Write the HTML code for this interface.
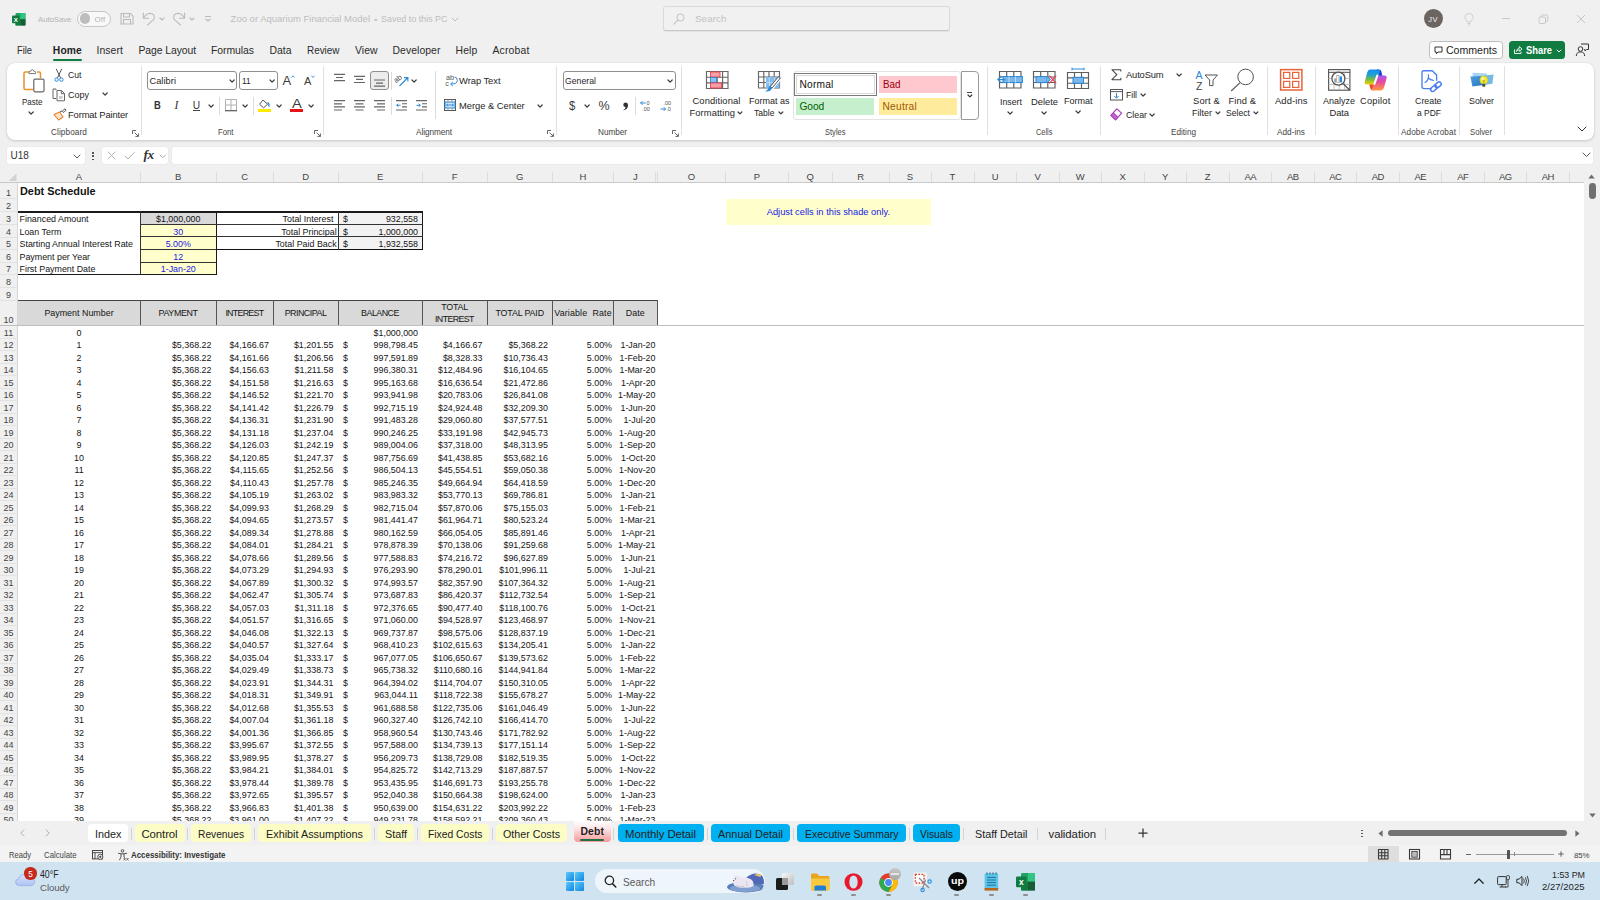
<!DOCTYPE html>
<html lang="en"><head><meta charset="utf-8"><title>Excel</title>
<style>
*{box-sizing:border-box;margin:0;padding:0}
html,body{width:1600px;height:900px;overflow:hidden}
body{background:#f0f0f0;font-family:"Liberation Sans",sans-serif;position:relative;color:#242424}
i{font-style:normal}
.abs{position:absolute}
/* GRID */
#grid{position:absolute;left:0;top:0;width:1600px;height:821px;overflow:hidden;pointer-events:none}
#sheet{position:absolute;left:17.5px;top:182.5px;width:1566.5px;height:638.5px;background:#fff}
.colhdr{position:absolute;left:0;top:170px;width:1584px;height:12.5px;background:#f0f0f0;border-bottom:1px solid #c9c9c9}
.ch{position:absolute;top:0;height:13px;line-height:14px;text-align:center;font-size:9.5px;color:#444}
.cs{position:absolute;top:172px;width:1px;height:10px;background:#dcdcdc}
.rowhdr{position:absolute;left:0;top:182.5px;width:17.5px;height:640px;background:#f0f0f0;border-right:1px solid #d6d6d6}
.rh{position:absolute;left:0;width:17px;text-align:center;font-size:9px;color:#444;overflow:hidden}
.rs{position:absolute;left:0;width:17px;height:1px;background:#e2e2e2}
.c{position:absolute;font-size:8.9px;white-space:nowrap;color:#141414;overflow:visible}
.c.l{text-align:left;padding-left:2px}
.c.r{text-align:right}
.c.ctr{text-align:center}
.c.p4{padding-right:4.6px}
.c.p2{padding-right:1.5px}
.c.acc{padding-right:4.5px}
.ds{position:absolute;left:5px;font-weight:normal}
.c.title{font-weight:bold;font-size:10.9px;padding-left:2.5px}
.c.gray{background:#d9d9d9}
.c.egray{background:#f2f2f2}
.c.yel{background:#ffffcc;color:#1a1ae6}
.yelbox{background:#ffffcc;color:#1a1ae6;font-size:9.3px!important}
.c.th{background:#d9d9d9;text-align:center;line-height:26px}
.ln{position:absolute}
.c.th.two{line-height:12px;padding-top:1px;white-space:normal}
</style>
<style>
.t{position:absolute;line-height:14px;white-space:nowrap;color:#242424}
svg{overflow:visible}
</style>
</head>
<body>
<svg class="abs" style="left:12.00px;top:12.50px" width="13.5" height="12.5" viewBox="0 0 13.5 12.5"><rect x="3.5" y="0" width="10" height="12.5" rx="1" fill="#21a366"/><rect x="8.5" y="0" width="5" height="6.2" fill="#33c481"/><rect x="3.5" y="6.2" width="5" height="6.3" fill="#107c41"/><rect x="8.5" y="6.2" width="5" height="6.3" fill="#185c37"/><rect x="0" y="2.6" width="7.6" height="7.6" rx="1" fill="#107c41"/><text x="3.8" y="8.7" font-size="6.2" font-weight="bold" fill="#fff" text-anchor="middle" font-family="Liberation Sans,sans-serif">X</text></svg>
<span class="t" style="left:38.10px;top:13.00px;font-size:7.9px;letter-spacing:-0.127px;color:#b4b4b4;">AutoSave</span>
<i class="abs" style="left:77.00px;top:10.50px;width:33.50px;height:16.00px;border:1px solid #c6c6c6;border-radius:8px;background:#f8f8f8"></i>
<i class="abs" style="left:79.70px;top:13.40px;width:10.60px;height:10.60px;border-radius:50%;background:#bdbdbd"></i>
<span class="t" style="left:94.50px;top:13.00px;font-size:7.9px;letter-spacing:0.203px;color:#b4b4b4;">Off</span>
<svg class="abs" style="left:120.00px;top:12.00px" width="14" height="13" viewBox="0 0 14 13"><path d="M1 1.5 H10.5 L13 4 V12 H1 Z M3.5 1.5 V5 H9.5 V1.5 M3.5 12 V7.5 H10.5 V12" fill="none" stroke="#bcbcbc" stroke-width="1.1"/></svg>
<svg class="abs" style="left:142.00px;top:11.50px" width="14" height="14" viewBox="0 0 14 14"><path d="M1.4 1 V6.2 H6.5 M1.6 6 C3.5 2.5 7 0.4 10 1.8 C13.2 3.4 12.8 6.4 11 8.2 L5.6 13" fill="none" stroke="#bcbcbc" stroke-width="1.1" stroke-linecap="round"/></svg>
<svg class="abs" style="left:159.00px;top:16.60px" width="6.0" height="4.0" viewBox="0 0 6.0 4.0"><path d="M1 1 L3.00 3.00 L5.00 1" fill="none" stroke="#bcbcbc" stroke-width="1.15" stroke-linecap="round" stroke-linejoin="round"/></svg>
<svg class="abs" style="left:172.00px;top:11.50px" width="14" height="14" viewBox="0 0 14 14"><path d="M12.6 1 V6.2 H7.5 M12.4 6 C10.5 2.5 7 0.4 4 1.8 C0.8 3.4 1.2 6.4 3 8.2 L8.4 13" fill="none" stroke="#bcbcbc" stroke-width="1.1" stroke-linecap="round"/></svg>
<svg class="abs" style="left:189.00px;top:16.60px" width="6.0" height="4.0" viewBox="0 0 6.0 4.0"><path d="M1 1 L3.00 3.00 L5.00 1" fill="none" stroke="#bcbcbc" stroke-width="1.15" stroke-linecap="round" stroke-linejoin="round"/></svg>
<i class="abs" style="left:205.00px;top:16.20px;width:6.00px;height:1.00px;background:#bcbcbc"></i>
<svg class="abs" style="left:205.00px;top:18.00px" width="6.0" height="4.0" viewBox="0 0 6.0 4.0"><path d="M1 1 L3.00 3.00 L5.00 1" fill="none" stroke="#bcbcbc" stroke-width="1.15" stroke-linecap="round" stroke-linejoin="round"/></svg>
<span class="t" style="left:230.60px;top:12.00px;font-size:9.5px;letter-spacing:-0.000px;color:#bdbdbd;">Zoo or Aquarium Financial Model</span>
<span class="t" style="left:373.50px;top:13.00px;font-size:8px;transform:scaleX(1.2444);transform-origin:0 50%;color:#bdbdbd;">•</span>
<span class="t" style="left:381.00px;top:12.00px;font-size:9.5px;transform:scaleX(0.9397);transform-origin:0 50%;color:#bdbdbd;">Saved to this PC</span>
<svg class="abs" style="left:451.00px;top:17.00px" width="8.0" height="5.0" viewBox="0 0 8.0 5.0"><path d="M1 1 L4.00 4.00 L7.00 1" fill="none" stroke="#bdbdbd" stroke-width="1" stroke-linecap="round" stroke-linejoin="round"/></svg>
<i class="abs" style="left:662.70px;top:6.40px;width:286.90px;height:25.00px;border:1px solid #dadada;border-bottom-color:#c8c8c8;border-radius:3px;background:#f1f1f1;box-shadow:0 1px 1px rgba(0,0,0,.06)"></i>
<svg class="abs" style="left:672.50px;top:12.50px" width="12" height="12" viewBox="0 0 12 12"><circle cx="7.5" cy="4.5" r="3.6" fill="none" stroke="#c2c2c2" stroke-width="1"/><path d="M5 7.2 L1 11.2" stroke="#c2c2c2" stroke-width="1.1" stroke-linecap="round"/></svg>
<span class="t" style="left:695.00px;top:12.00px;font-size:9.8px;letter-spacing:0.076px;color:#c2c2c2;">Search</span>
<i class="abs" style="left:1423.50px;top:9.30px;width:19.00px;height:19.00px;border-radius:50%;background:#6b6461"></i>
<span class="t" style="left:1428.30px;top:13.00px;font-size:7.6px;letter-spacing:0.363px;color:#f0f0f0;">JV</span>
<svg class="abs" style="left:1463.00px;top:11.50px" width="12" height="15" viewBox="0 0 12 15"><path d="M6 1.5 C3.2 1.5 2 3.6 2 5.3 C2 7.2 3.6 8 4 10 H8 C8.4 8 10 7.2 10 5.3 C10 3.6 8.8 1.5 6 1.5 Z M4.3 11.6 H7.7 M5 13.2 H7" fill="none" stroke="#cfcfcf" stroke-width="1"/></svg>
<i class="abs" style="left:1502.00px;top:18.00px;width:8.00px;height:1.00px;background:#c8c8c8"></i>
<svg class="abs" style="left:1538.00px;top:13.50px" width="11" height="11" viewBox="0 0 11 11"><rect x="1" y="3" width="6.5" height="6.5" rx="1.2" fill="none" stroke="#c8c8c8" stroke-width="1"/><path d="M3.2 3 V2.2 Q3.2 1 4.4 1 H8.6 Q9.8 1 9.8 2.2 V6.4 Q9.8 7.6 8.6 7.6 H7.6" fill="none" stroke="#c8c8c8" stroke-width="1"/></svg>
<svg class="abs" style="left:1576.00px;top:14.00px" width="10" height="10" viewBox="0 0 10 10"><path d="M1 1 L9 9 M9 1 L1 9" stroke="#c4c4c4" stroke-width="1"/></svg>
<span class="t" style="left:17.00px;top:44.00px;font-size:10.4px;transform:scaleX(0.8955);transform-origin:0 50%;color:#2b2b2b;">File</span>
<span class="t" style="left:96.50px;top:44.00px;font-size:10.4px;letter-spacing:0.083px;color:#2b2b2b;">Insert</span>
<span class="t" style="left:138.50px;top:44.00px;font-size:10.4px;letter-spacing:-0.078px;color:#2b2b2b;">Page Layout</span>
<span class="t" style="left:211.00px;top:44.00px;font-size:10.4px;letter-spacing:-0.039px;color:#2b2b2b;">Formulas</span>
<span class="t" style="left:269.50px;top:44.00px;font-size:10.4px;letter-spacing:0.012px;color:#2b2b2b;">Data</span>
<span class="t" style="left:307.00px;top:44.00px;font-size:10.4px;transform:scaleX(0.9537);transform-origin:0 50%;color:#2b2b2b;">Review</span>
<span class="t" style="left:355.00px;top:44.00px;font-size:10.4px;letter-spacing:0.039px;color:#2b2b2b;">View</span>
<span class="t" style="left:392.50px;top:44.00px;font-size:10.4px;letter-spacing:0.069px;color:#2b2b2b;">Developer</span>
<span class="t" style="left:455.50px;top:44.00px;font-size:10.4px;letter-spacing:0.156px;color:#2b2b2b;">Help</span>
<span class="t" style="left:492.50px;top:44.00px;font-size:10.4px;letter-spacing:0.170px;color:#2b2b2b;">Acrobat</span>
<span class="t" style="left:52.80px;top:44.00px;font-size:10.3px;letter-spacing:0.148px;font-weight:bold;color:#1f1f1f;">Home</span>
<i class="abs" style="left:53.00px;top:58.50px;width:29.00px;height:2.00px;background:#107c41;border-radius:1px"></i>
<i class="abs" style="left:1429.00px;top:41.30px;width:73.50px;height:18.00px;border:1px solid #bdbdbd;border-radius:3.5px;background:#fff"></i>
<svg class="abs" style="left:1433.50px;top:45.50px" width="9" height="9" viewBox="0 0 9 9"><path d="M1 1 H8 V6 H4 L2.3 7.8 V6 H1 Z" fill="none" stroke="#333" stroke-width="1" stroke-linejoin="round"/></svg>
<span class="t" style="left:1446.00px;top:43.00px;font-size:10.6px;letter-spacing:-0.027px;color:#242424;">Comments</span>
<i class="abs" style="left:1509.00px;top:41.00px;width:55.50px;height:18.30px;border-radius:3.5px;background:#107c41"></i>
<svg class="abs" style="left:1512.50px;top:45.00px" width="10" height="10" viewBox="0 0 10 10"><path d="M1.5 4.5 V8.5 H8 V6.5 M3.5 6.5 C3.8 4.2 5 3.3 6.3 3.3 V1.5 L9 4 L6.3 6.3 V4.7 C5.2 4.7 4.2 5.2 3.5 6.5 Z" fill="none" stroke="#fff" stroke-width="0.9" stroke-linejoin="round"/></svg>
<span class="t" style="left:1525.50px;top:43.00px;font-size:10.6px;transform:scaleX(0.8828);transform-origin:0 50%;font-weight:bold;color:#fff;">Share</span>
<svg class="abs" style="left:1556.00px;top:48.50px" width="6.0" height="4.0" viewBox="0 0 6.0 4.0"><path d="M1 1 L3.00 3.00 L5.00 1" fill="none" stroke="#fff" stroke-width="1" stroke-linecap="round" stroke-linejoin="round"/></svg>
<svg class="abs" style="left:1574.50px;top:43.00px" width="15" height="14" viewBox="0 0 15 14"><circle cx="5.5" cy="6" r="2.3" fill="none" stroke="#333" stroke-width="1"/><path d="M1.3 13 C1.6 9.6 3.5 9 5.5 9 C7.5 9 9.4 9.6 9.7 13" fill="none" stroke="#333" stroke-width="1"/><path d="M6 1 H13.5 V6.5 H11.5 L10 8 V6.5 H9.3" fill="none" stroke="#333" stroke-width="1" stroke-linejoin="round"/></svg>
<i class="abs" style="left:6.50px;top:62.50px;width:1587.50px;height:77.50px;background:#fff;border-radius:8px;box-shadow:0 1px 3px rgba(0,0,0,.16),0 0 1px rgba(0,0,0,.12)"></i>
<svg class="abs" style="left:23.00px;top:69.00px" width="22" height="24" viewBox="0 0 22 24"><path d="M7 3 H2.2 Q1 3 1 4.2 V19.3 Q1 20.5 2.2 20.5 H10" fill="none" stroke="#e8912d" stroke-width="1.5"/><path d="M14 3 H16.3 Q17.5 3 17.5 4.2 V9" fill="none" stroke="#e8912d" stroke-width="1.5"/><path d="M6 4.6 V3.2 Q6 2.4 6.8 2.4 H7.6 Q8 0.6 9.3 0.6 Q10.6 0.6 11 2.4 H11.8 Q12.6 2.4 12.6 3.2 V4.6 Z" fill="#fff" stroke="#777" stroke-width="1"/><rect x="10.8" y="10.2" width="10.2" height="12.6" rx="1.2" fill="#fff" stroke="#666" stroke-width="1.2"/></svg>
<span class="t" style="left:21.50px;top:95.00px;font-size:9.4px;transform:scaleX(0.8547);transform-origin:0 50%;color:#262626;">Paste</span>
<svg class="abs" style="left:28.10px;top:111.25px" width="6.2" height="4.1" viewBox="0 0 6.2 4.1"><path d="M1 1 L3.10 3.10 L5.20 1" fill="none" stroke="#3a3a3a" stroke-width="1.2" stroke-linecap="round" stroke-linejoin="round"/></svg>
<svg class="abs" style="left:54.00px;top:67.50px" width="10" height="14" viewBox="0 0 10 14"><path d="M2.2 0.8 L6.6 10 M7.8 0.8 L3.4 10" stroke="#555" stroke-width="1" fill="none"/><circle cx="2.6" cy="11.6" r="1.7" fill="none" stroke="#2b88d8" stroke-width="1"/><circle cx="7.4" cy="11.6" r="1.7" fill="none" stroke="#2b88d8" stroke-width="1"/></svg>
<span class="t" style="left:68.00px;top:68.00px;font-size:9.4px;transform:scaleX(0.9251);transform-origin:0 50%;color:#262626;">Cut</span>
<svg class="abs" style="left:52.00px;top:87.50px" width="14" height="14" viewBox="0 0 14 14"><path d="M4 2.2 V1 H1 V10.5 H4" fill="none" stroke="#666" stroke-width="1"/><path d="M5 2.5 H9.5 L12.5 5.5 V12.8 H5 Z M9.3 2.7 V5.7 H12.3" fill="#fff" stroke="#666" stroke-width="1" stroke-linejoin="round"/><rect x="7" y="8" width="3.5" height="3" fill="#ccc"/></svg>
<span class="t" style="left:68.00px;top:88.00px;font-size:9.4px;transform:scaleX(0.9593);transform-origin:0 50%;color:#262626;">Copy</span>
<svg class="abs" style="left:102.10px;top:92.45px" width="6.2" height="4.1" viewBox="0 0 6.2 4.1"><path d="M1 1 L3.10 3.10 L5.20 1" fill="none" stroke="#3a3a3a" stroke-width="1.2" stroke-linecap="round" stroke-linejoin="round"/></svg>
<svg class="abs" style="left:52.50px;top:107.50px" width="14" height="13" viewBox="0 0 14 13"><path d="M1 6.5 L6.5 4 L10 9 L5.5 12 Z" fill="#fbe3c8" stroke="#e8812d" stroke-width="1.1" stroke-linejoin="round"/><path d="M7 4 L9.2 2.8 L10.6 4.8 M9.8 2.6 L12 0.8 L13 2.2 L11 4.2" fill="none" stroke="#555" stroke-width="1"/></svg>
<span class="t" style="left:68.00px;top:108.00px;font-size:9.4px;letter-spacing:-0.143px;color:#262626;">Format Painter</span>
<span class="t" style="left:51.00px;top:126.00px;font-size:8.2px;letter-spacing:0.106px;color:#444;">Clipboard</span>
<svg class="abs" style="left:131.50px;top:130.00px" width="7" height="7" viewBox="0 0 7 7"><path d="M0.5 4 V0.5 H4 M2.6 2.6 L6.3 6.3 M6.4 3.4 V6.4 H3.4" fill="none" stroke="#555" stroke-width="0.9"/></svg>
<i class="abs" style="left:141.00px;top:66.00px;width:1.00px;height:69.00px;background:#e1e1e1"></i>
<i class="abs" style="left:147.30px;top:71.30px;width:90.00px;height:18.50px;border:1px solid #8f8f8f;border-radius:3px;background:#fff"></i>
<span class="t" style="left:149.50px;top:74.00px;font-size:9.2px;letter-spacing:0.065px;color:#262626;">Calibri</span>
<svg class="abs" style="left:229.40px;top:79.45px" width="6.2" height="4.1" viewBox="0 0 6.2 4.1"><path d="M1 1 L3.10 3.10 L5.20 1" fill="none" stroke="#3a3a3a" stroke-width="1.2" stroke-linecap="round" stroke-linejoin="round"/></svg>
<i class="abs" style="left:239.00px;top:71.30px;width:38.50px;height:18.50px;border:1px solid #8f8f8f;border-radius:3px;background:#fff"></i>
<span class="t" style="left:241.50px;top:74.00px;font-size:9.2px;transform:scaleX(0.8903);transform-origin:0 50%;color:#262626;">11</span>
<svg class="abs" style="left:269.20px;top:79.45px" width="6.2" height="4.1" viewBox="0 0 6.2 4.1"><path d="M1 1 L3.10 3.10 L5.20 1" fill="none" stroke="#3a3a3a" stroke-width="1.2" stroke-linecap="round" stroke-linejoin="round"/></svg>
<span class="t" style="left:282.50px;top:74.00px;font-size:13px;letter-spacing:-0.172px;color:#3b3b3b;">A</span>
<svg class="abs" style="left:290.50px;top:74.50px" width="4" height="3" viewBox="0 0 4 3"><path d="M0.5 2.5 L2 0.8 L3.5 2.5" fill="none" stroke="#2b88d8" stroke-width="0.9"/></svg>
<span class="t" style="left:304.00px;top:74.00px;font-size:11px;letter-spacing:0.156px;color:#3b3b3b;">A</span>
<svg class="abs" style="left:311.00px;top:74.50px" width="4" height="3" viewBox="0 0 4 3"><path d="M0.5 0.8 L2 2.5 L3.5 0.8" fill="none" stroke="#2b88d8" stroke-width="0.9"/></svg>
<span class="t" style="left:153.50px;top:98.00px;font-size:10.5px;transform:scaleX(0.8955);transform-origin:0 50%;font-weight:bold;color:#333;">B</span>
<span class="t" style="left:174.5px;top:98px;font-size:11.5px;font-style:italic;font-family:'Liberation Serif',serif;color:#333">I</span>
<span class="t" style="left:192.80px;top:99.00px;font-size:10.2px;letter-spacing:-0.159px;color:#333;">U</span>
<i class="abs" style="left:192.50px;top:110.20px;width:7.70px;height:0.90px;background:#444"></i>
<svg class="abs" style="left:208.20px;top:103.95px" width="6.2" height="4.1" viewBox="0 0 6.2 4.1"><path d="M1 1 L3.10 3.10 L5.20 1" fill="none" stroke="#3a3a3a" stroke-width="1.2" stroke-linecap="round" stroke-linejoin="round"/></svg>
<i class="abs" style="left:219.00px;top:97.00px;width:1.00px;height:17.50px;background:#dcdcdc"></i>
<svg class="abs" style="left:224.50px;top:99.00px" width="12" height="12.5" viewBox="0 0 12 12.5"><path d="M0.5 0.5 H11.5 V11.5 M0.5 0.5 V11.5 M6 0.5 V11.5 M0.5 6 H11.5" fill="none" stroke="#b0b0b0" stroke-width="1"/><path d="M0 11.7 H12" stroke="#555" stroke-width="1.2"/></svg>
<svg class="abs" style="left:242.10px;top:103.95px" width="6.2" height="4.1" viewBox="0 0 6.2 4.1"><path d="M1 1 L3.10 3.10 L5.20 1" fill="none" stroke="#3a3a3a" stroke-width="1.2" stroke-linecap="round" stroke-linejoin="round"/></svg>
<i class="abs" style="left:253.00px;top:97.00px;width:1.00px;height:17.50px;background:#dcdcdc"></i>
<svg class="abs" style="left:258.00px;top:98.50px" width="13" height="10" viewBox="0 0 13 10"><path d="M5 1 L9.6 5.2 L5.6 8.8 L1.6 5.2 Z" fill="#fff" stroke="#555" stroke-width="1" stroke-linejoin="round"/><path d="M9.5 3.5 Q11.5 4.5 10.8 7.5" fill="none" stroke="#2b88d8" stroke-width="1.3"/></svg>
<i class="abs" style="left:258.00px;top:109.30px;width:13.00px;height:2.70px;background:#ffeb00"></i>
<svg class="abs" style="left:276.10px;top:103.95px" width="6.2" height="4.1" viewBox="0 0 6.2 4.1"><path d="M1 1 L3.10 3.10 L5.20 1" fill="none" stroke="#3a3a3a" stroke-width="1.2" stroke-linecap="round" stroke-linejoin="round"/></svg>
<span class="t" style="left:291.60px;top:97.00px;font-size:12.6px;transform:scaleX(1.1658);transform-origin:0 50%;color:#3b3b3b;">A</span>
<i class="abs" style="left:290.00px;top:109.30px;width:12.60px;height:2.70px;background:#e8111a"></i>
<svg class="abs" style="left:307.90px;top:103.95px" width="6.2" height="4.1" viewBox="0 0 6.2 4.1"><path d="M1 1 L3.10 3.10 L5.20 1" fill="none" stroke="#3a3a3a" stroke-width="1.2" stroke-linecap="round" stroke-linejoin="round"/></svg>
<span class="t" style="left:218.00px;top:126.00px;font-size:8.2px;transform:scaleX(0.9457);transform-origin:0 50%;color:#444;">Font</span>
<svg class="abs" style="left:314.00px;top:130.00px" width="7" height="7" viewBox="0 0 7 7"><path d="M0.5 4 V0.5 H4 M2.6 2.6 L6.3 6.3 M6.4 3.4 V6.4 H3.4" fill="none" stroke="#555" stroke-width="0.9"/></svg>
<i class="abs" style="left:323.00px;top:66.00px;width:1.00px;height:69.00px;background:#e1e1e1"></i>
<svg class="abs" style="left:334.00px;top:72.00px" width="12" height="12" viewBox="0 0 12 12"><path d="M0.0 2.4 H11.0 M2.0 5.5 H9.0 M0.0 8.6 H11.0 " stroke="#666" stroke-width="1.2" fill="none"/></svg>
<svg class="abs" style="left:354.00px;top:72.00px" width="12" height="12" viewBox="0 0 12 12"><path d="M0.0 4.3 H11.0 M2.0 7.4 H9.0 M0.0 10.5 H11.0 " stroke="#666" stroke-width="1.2" fill="none"/></svg>
<i class="abs" style="left:370.00px;top:71.30px;width:18.60px;height:18.50px;border:1px solid #8f8f8f;border-radius:3px;background:#ececec"></i>
<svg class="abs" style="left:374.00px;top:77.00px" width="12" height="12" viewBox="0 0 12 12"><path d="M0.0 3.0 H11.0 M2.0 6.1 H9.0 M0.0 9.2 H11.0 " stroke="#666" stroke-width="1.2" fill="none"/></svg>
<i class="abs" style="left:390.50px;top:72.00px;width:1.00px;height:18.00px;background:#dcdcdc"></i>
<svg class="abs" style="left:395.00px;top:73.50px" width="14" height="13" viewBox="0 0 14 13"><text x="0" y="7.5" font-size="7.5" fill="#555" font-family="Liberation Sans,sans-serif" transform="rotate(-38 3 7)">ab</text><path d="M4.5 12 L12.5 4 M9 3.6 H12.9 V7.5" fill="none" stroke="#2b88d8" stroke-width="1.1"/></svg>
<svg class="abs" style="left:411.40px;top:79.45px" width="6.2" height="4.1" viewBox="0 0 6.2 4.1"><path d="M1 1 L3.10 3.10 L5.20 1" fill="none" stroke="#3a3a3a" stroke-width="1.2" stroke-linecap="round" stroke-linejoin="round"/></svg>
<i class="abs" style="left:435.00px;top:71.00px;width:1.00px;height:47.50px;background:#dcdcdc"></i>
<svg class="abs" style="left:444.50px;top:74.00px" width="13" height="14" viewBox="0 0 13 14"><text x="1" y="6.3" font-size="7.2" fill="#555" font-family="Liberation Sans,sans-serif">ab</text><text x="0.3" y="12" font-size="7.2" fill="#555" font-family="Liberation Sans,sans-serif">c</text><path d="M9.5 3 Q12.3 3 12.3 6.5 Q12.3 10 6 10 M7.8 8 L5.6 10 L7.8 12" fill="none" stroke="#2b88d8" stroke-width="1"/></svg>
<span class="t" style="left:459.00px;top:74.00px;font-size:9.4px;letter-spacing:-0.040px;color:#262626;">Wrap Text</span>
<svg class="abs" style="left:334.00px;top:100.00px" width="12" height="12" viewBox="0 0 12 12"><path d="M0.0 0.6 H11.0 M0.0 3.8 H8.0 M0.0 6.9 H11.0 M0.0 10.0 H8.0 " stroke="#666" stroke-width="1.2" fill="none"/></svg>
<svg class="abs" style="left:354.00px;top:100.00px" width="12" height="12" viewBox="0 0 12 12"><path d="M0.0 0.6 H11.0 M1.5 3.8 H9.5 M0.0 6.9 H11.0 M1.5 10.0 H9.5 " stroke="#666" stroke-width="1.2" fill="none"/></svg>
<svg class="abs" style="left:374.00px;top:100.00px" width="12" height="12" viewBox="0 0 12 12"><path d="M0.0 0.6 H11.0 M3.0 3.8 H11.0 M0.0 6.9 H11.0 M3.0 10.0 H11.0 " stroke="#666" stroke-width="1.2" fill="none"/></svg>
<i class="abs" style="left:390.50px;top:97.00px;width:1.00px;height:17.50px;background:#dcdcdc"></i>
<svg class="abs" style="left:396.00px;top:100.00px" width="12" height="12" viewBox="0 0 12 12"><path d="M0 0.6 H11 M6 3.75 H11 M6 6.9 H11 M0 10 H11" stroke="#666" stroke-width="1.2"/><path d="M4.5 5.3 H0.8 M2.3 3.7 L0.7 5.3 L2.3 6.9" fill="none" stroke="#2b88d8" stroke-width="1"/></svg>
<svg class="abs" style="left:416.00px;top:100.00px" width="12" height="12" viewBox="0 0 12 12"><path d="M0 0.6 H11 M6 3.75 H11 M6 6.9 H11 M0 10 H11" stroke="#666" stroke-width="1.2"/><path d="M0.5 5.3 H4.2 M2.7 3.7 L4.3 5.3 L2.7 6.9" fill="none" stroke="#2b88d8" stroke-width="1"/></svg>
<svg class="abs" style="left:443.50px;top:99.00px" width="12" height="12" viewBox="0 0 12 12"><rect x="0.5" y="0.5" width="11" height="11" fill="#fff" stroke="#555" stroke-width="1"/><rect x="1" y="3" width="10" height="6" fill="#cfe6f8" stroke="#2b88d8" stroke-width="1"/><path d="M4 0.5 V3 M8 0.5 V3 M4 9 V11.5 M8 9 V11.5" stroke="#888" stroke-width="0.8"/><path d="M2.6 6 H9.4 M4 4.8 L2.6 6 L4 7.2 M8 4.8 L9.4 6 L8 7.2" fill="none" stroke="#2b88d8" stroke-width="0.9"/></svg>
<span class="t" style="left:459.00px;top:99.00px;font-size:9.4px;letter-spacing:-0.035px;color:#262626;">Merge &amp; Center</span>
<svg class="abs" style="left:537.40px;top:103.95px" width="6.2" height="4.1" viewBox="0 0 6.2 4.1"><path d="M1 1 L3.10 3.10 L5.20 1" fill="none" stroke="#3a3a3a" stroke-width="1.2" stroke-linecap="round" stroke-linejoin="round"/></svg>
<span class="t" style="left:416.00px;top:126.00px;font-size:8.2px;letter-spacing:-0.047px;color:#444;">Alignment</span>
<svg class="abs" style="left:547.00px;top:130.00px" width="7" height="7" viewBox="0 0 7 7"><path d="M0.5 4 V0.5 H4 M2.6 2.6 L6.3 6.3 M6.4 3.4 V6.4 H3.4" fill="none" stroke="#555" stroke-width="0.9"/></svg>
<i class="abs" style="left:556.00px;top:66.00px;width:1.00px;height:69.00px;background:#e1e1e1"></i>
<i class="abs" style="left:563.00px;top:71.30px;width:112.60px;height:18.50px;border:1px solid #8f8f8f;border-radius:3px;background:#fff"></i>
<span class="t" style="left:565.00px;top:74.00px;font-size:9.2px;transform:scaleX(0.9484);transform-origin:0 50%;color:#262626;">General</span>
<svg class="abs" style="left:666.90px;top:79.45px" width="6.2" height="4.1" viewBox="0 0 6.2 4.1"><path d="M1 1 L3.10 3.10 L5.20 1" fill="none" stroke="#3a3a3a" stroke-width="1.2" stroke-linecap="round" stroke-linejoin="round"/></svg>
<span class="t" style="left:569.00px;top:99.00px;font-size:12.5px;transform:scaleX(0.9061);transform-origin:0 50%;color:#3b3b3b;">$</span>
<svg class="abs" style="left:584.20px;top:103.95px" width="6.2" height="4.1" viewBox="0 0 6.2 4.1"><path d="M1 1 L3.10 3.10 L5.20 1" fill="none" stroke="#3a3a3a" stroke-width="1.2" stroke-linecap="round" stroke-linejoin="round"/></svg>
<span class="t" style="left:598.50px;top:99.00px;font-size:12.5px;letter-spacing:0.375px;color:#3b3b3b;">%</span>
<svg class="abs" style="left:621.50px;top:101.50px" width="7" height="9" viewBox="0 0 7 9"><path d="M3.4 0.6 A2.2 2.2 0 1 0 3.6 5 Q3.6 7 1 8.4 Q6 7.4 6 3.2 Q6 0.6 3.4 0.6 Z" fill="#333"/></svg>
<i class="abs" style="left:635.00px;top:97.00px;width:1.00px;height:17.50px;background:#dcdcdc"></i>
<svg class="abs" style="left:640.00px;top:99.50px" width="13" height="12" viewBox="0 0 13 12"><text x="6.6" y="5" font-size="5.6" fill="#555" font-family="Liberation Sans,sans-serif">0</text><text x="2.2" y="11.2" font-size="5.6" fill="#555" font-family="Liberation Sans,sans-serif">.00</text><path d="M5.6 3 H0.8 M2.4 1.2 L0.6 3 L2.4 4.8" fill="none" stroke="#2b88d8" stroke-width="1"/></svg>
<svg class="abs" style="left:660.00px;top:99.50px" width="13" height="12" viewBox="0 0 13 12"><text x="3.4" y="5" font-size="5.6" fill="#555" font-family="Liberation Sans,sans-serif">.00</text><text x="6.2" y="11.2" font-size="5.6" fill="#555" font-family="Liberation Sans,sans-serif">.0</text><path d="M0.6 9 H5.4 M3.8 7.2 L5.6 9 L3.8 10.8" fill="none" stroke="#2b88d8" stroke-width="1"/></svg>
<span class="t" style="left:598.00px;top:126.00px;font-size:8.2px;letter-spacing:-0.021px;color:#444;">Number</span>
<svg class="abs" style="left:672.00px;top:130.00px" width="7" height="7" viewBox="0 0 7 7"><path d="M0.5 4 V0.5 H4 M2.6 2.6 L6.3 6.3 M6.4 3.4 V6.4 H3.4" fill="none" stroke="#555" stroke-width="0.9"/></svg>
<i class="abs" style="left:681.00px;top:66.00px;width:1.00px;height:69.00px;background:#e1e1e1"></i>
<svg class="abs" style="left:705.50px;top:71.00px" width="22.5" height="18" viewBox="0 0 22.5 18"><path d="M0.5 0.5 H22.0 V17.5 H0.5 Z M5.9 0.5 V17.5 M11.2 0.5 V17.5 M16.6 0.5 V17.5 M0.5 6.2 H22.0 M0.5 11.8 H22.0 " fill="#fff" stroke="#666" stroke-width="1.15"/><rect x="4.5" y="1" width="9.5" height="5" fill="#f4a0a8" stroke="#e8414f" stroke-width="0.9"/><rect x="4.5" y="6.4" width="6" height="5" fill="#8cc4f0" stroke="#2b88d8" stroke-width="0.9"/><rect x="4.5" y="12" width="11" height="5" fill="#f4a0a8" stroke="#e8414f" stroke-width="0.9"/></svg>
<span class="t" style="left:692.50px;top:94.00px;font-size:9.4px;letter-spacing:0.098px;color:#262626;">Conditional</span>
<span class="t" style="left:689.50px;top:106.00px;font-size:9.4px;letter-spacing:0.069px;color:#262626;">Formatting</span>
<svg class="abs" style="left:737.30px;top:110.85px" width="5.8" height="3.9" viewBox="0 0 5.8 3.9"><path d="M1 1 L2.90 2.90 L4.80 1" fill="none" stroke="#3a3a3a" stroke-width="1.2" stroke-linecap="round" stroke-linejoin="round"/></svg>
<svg class="abs" style="left:757.50px;top:71.00px" width="22" height="17.5" viewBox="0 0 22 17.5"><path d="M0.5 0.5 H21.5 V17.0 H0.5 Z M5.8 0.5 V17.0 M11.0 0.5 V17.0 M16.2 0.5 V17.0 M0.5 6.0 H21.5 M0.5 11.5 H21.5 " fill="#fff" stroke="#666" stroke-width="1.15"/><rect x="8" y="6" width="13.5" height="11" fill="#7ab8ec" opacity="0.95"/><path d="M11.3 6 V17 M16.4 6 V17 M8 11.7 H21.5" stroke="#cfe6f8" stroke-width="0.8"/><path d="M21.5 7.5 L13.5 17 " stroke="#fff" stroke-width="4"/><path d="M22.8 6.6 L14 17.2" stroke="#555" stroke-width="1" /><path d="M20.6 5.4 L12 16" stroke="#555" stroke-width="1"/><path d="M14.2 16.2 Q13.5 21 7 20.4 Q10.5 19 10.8 15.2 Z" fill="#2b88d8"/></svg>
<span class="t" style="left:748.50px;top:94.00px;font-size:9.4px;transform:scaleX(0.9596);transform-origin:0 50%;color:#262626;">Format as</span>
<span class="t" style="left:754.00px;top:106.00px;font-size:9.4px;transform:scaleX(0.9143);transform-origin:0 50%;color:#262626;">Table</span>
<svg class="abs" style="left:777.60px;top:110.85px" width="5.8" height="3.9" viewBox="0 0 5.8 3.9"><path d="M1 1 L2.90 2.90 L4.80 1" fill="none" stroke="#3a3a3a" stroke-width="1.2" stroke-linecap="round" stroke-linejoin="round"/></svg>
<i class="abs" style="left:793.20px;top:71.30px;width:167.80px;height:48.30px;border:1px solid #e3e3e3;border-radius:3px;background:#fff"></i>
<i class="abs" style="left:794.00px;top:73.00px;width:82.60px;height:22.50px;border:1.4px solid #7a7a7a;background:#fff;box-shadow:inset 0 0 0 1px #fff, inset 0 0 0 2px #d8d8d8"></i>
<span class="t" style="left:799.50px;top:78.00px;font-size:10.2px;letter-spacing:0.193px;color:#111;">Normal</span>
<i class="abs" style="left:796.00px;top:98.00px;width:78.40px;height:17.30px;background:#c6efce"></i>
<span class="t" style="left:799.50px;top:100.00px;font-size:10.2px;letter-spacing:-0.105px;color:#006100;">Good</span>
<i class="abs" style="left:879.40px;top:75.60px;width:77.80px;height:17.40px;background:#ffc7ce"></i>
<span class="t" style="left:882.50px;top:78.00px;font-size:10.2px;transform:scaleX(0.9647);transform-origin:0 50%;color:#9c0006;">Bad</span>
<i class="abs" style="left:879.40px;top:98.00px;width:77.80px;height:17.30px;background:#ffeb9c"></i>
<span class="t" style="left:882.50px;top:100.00px;font-size:10.2px;letter-spacing:0.237px;color:#9c5700;">Neutral</span>
<i class="abs" style="left:960.50px;top:71.30px;width:18.70px;height:48.30px;border:1px solid #9a9a9a;border-radius:0 4px 4px 0;background:#fff"></i>
<i class="abs" style="left:966.80px;top:92.20px;width:5.20px;height:0.90px;background:#444"></i>
<svg class="abs" style="left:966.50px;top:94.05px" width="5.8" height="3.9" viewBox="0 0 5.8 3.9"><path d="M1 1 L2.90 2.90 L4.80 1" fill="none" stroke="#3a3a3a" stroke-width="1.2" stroke-linecap="round" stroke-linejoin="round"/></svg>
<span class="t" style="left:824.50px;top:126.00px;font-size:8.2px;transform:scaleX(0.9194);transform-origin:0 50%;color:#444;">Styles</span>
<i class="abs" style="left:987.00px;top:66.00px;width:1.00px;height:69.00px;background:#e1e1e1"></i>
<svg class="abs" style="left:999.00px;top:71.00px" width="22.5" height="17.5" viewBox="0 0 22.5 17.5"><path d="M0.5 0.5 H22.0 V17.0 H0.5 Z M7.7 0.5 V17.0 M14.8 0.5 V17.0 M0.5 6.0 H22.0 M0.5 11.5 H22.0 " fill="#fff" stroke="#5e5e5e" stroke-width="1.15"/><rect x="4" y="5.6" width="19.4" height="6" fill="#7ab8ec" stroke="#2b88d8" stroke-width="1"/><path d="M10 5.6 V11.6 M16.5 5.6 V11.6" stroke="#cfe6f8" stroke-width="0.8"/><path d="M6.5 8.6 H-0.8 M2.6 5 L-1.2 8.6 L2.6 12.2" fill="none" stroke="#2b88d8" stroke-width="1.1"/></svg>
<span class="t" style="left:999.50px;top:95.00px;font-size:9.4px;transform:scaleX(0.9380);transform-origin:0 50%;color:#262626;">Insert</span>
<svg class="abs" style="left:1007.20px;top:111.25px" width="6.2" height="4.1" viewBox="0 0 6.2 4.1"><path d="M1 1 L3.10 3.10 L5.20 1" fill="none" stroke="#3a3a3a" stroke-width="1.2" stroke-linecap="round" stroke-linejoin="round"/></svg>
<svg class="abs" style="left:1033.00px;top:71.00px" width="22.5" height="17.5" viewBox="0 0 22.5 17.5"><path d="M0.5 0.5 H22.0 V17.0 H0.5 Z M7.7 0.5 V17.0 M14.8 0.5 V17.0 M0.5 6.0 H22.0 M0.5 11.5 H22.0 " fill="#fff" stroke="#5e5e5e" stroke-width="1.15"/><rect x="3" y="5.6" width="11" height="6" fill="#7ab8ec" stroke="#2b88d8" stroke-width="1"/><path d="M14 5.6 L17.6 8.6 L14 11.6" fill="#7ab8ec" stroke="#2b88d8" stroke-width="1"/><path d="M16.4 4.6 L23.2 12.4 M23.2 4.6 L16.4 12.4" stroke="#e8414f" stroke-width="1.2"/></svg>
<span class="t" style="left:1031.00px;top:95.00px;font-size:9.4px;letter-spacing:-0.018px;color:#262626;">Delete</span>
<svg class="abs" style="left:1040.90px;top:111.25px" width="6.2" height="4.1" viewBox="0 0 6.2 4.1"><path d="M1 1 L3.10 3.10 L5.20 1" fill="none" stroke="#3a3a3a" stroke-width="1.2" stroke-linecap="round" stroke-linejoin="round"/></svg>
<svg class="abs" style="left:1067.00px;top:71.50px" width="22" height="17" viewBox="0 0 22 17"><path d="M0.5 0.5 H21.5 V16.5 H0.5 Z M7.5 0.5 V16.5 M14.5 0.5 V16.5 M0.5 5.8 H21.5 M0.5 11.2 H21.5 " fill="#fff" stroke="#5e5e5e" stroke-width="1.15"/><rect x="6" y="5.3" width="10.5" height="6" fill="#7ab8ec" stroke="#2b88d8" stroke-width="1"/><path d="M5 -3 H17 M5 -4.3 V-1.7 M17 -4.3 V-1.7" stroke="#2b88d8" stroke-width="1"/></svg>
<span class="t" style="left:1063.50px;top:94.00px;font-size:9.4px;transform:scaleX(0.9595);transform-origin:0 50%;color:#262626;">Format</span>
<svg class="abs" style="left:1074.50px;top:110.25px" width="6.2" height="4.1" viewBox="0 0 6.2 4.1"><path d="M1 1 L3.10 3.10 L5.20 1" fill="none" stroke="#3a3a3a" stroke-width="1.2" stroke-linecap="round" stroke-linejoin="round"/></svg>
<span class="t" style="left:1035.60px;top:126.00px;font-size:8.2px;transform:scaleX(0.9009);transform-origin:0 50%;color:#444;">Cells</span>
<i class="abs" style="left:1100.00px;top:66.00px;width:1.00px;height:69.00px;background:#e1e1e1"></i>
<svg class="abs" style="left:1111.00px;top:69.00px" width="10.5" height="11.5" viewBox="0 0 10.5 11.5"><path d="M9.8 2.6 V0.7 H0.9 L5.8 5.7 L0.9 10.7 H9.8 V8.8" fill="none" stroke="#444" stroke-width="1.05" stroke-linejoin="round"/></svg>
<span class="t" style="left:1126.00px;top:68.00px;font-size:9.4px;letter-spacing:-0.152px;color:#262626;">AutoSum</span>
<svg class="abs" style="left:1176.40px;top:72.95px" width="6.2" height="4.1" viewBox="0 0 6.2 4.1"><path d="M1 1 L3.10 3.10 L5.20 1" fill="none" stroke="#3a3a3a" stroke-width="1.2" stroke-linecap="round" stroke-linejoin="round"/></svg>
<svg class="abs" style="left:1110.00px;top:89.00px" width="13" height="11.5" viewBox="0 0 13 11.5"><rect x="0.5" y="0.5" width="12" height="10.5" fill="#fff" stroke="#555" stroke-width="1"/><path d="M0.5 2.6 H12.5" stroke="#555" stroke-width="1"/><path d="M6.5 4 V9 M4.4 7 L6.5 9.2 L8.6 7" fill="none" stroke="#2b88d8" stroke-width="1"/></svg>
<span class="t" style="left:1126.00px;top:88.00px;font-size:9.4px;transform:scaleX(0.9179);transform-origin:0 50%;color:#262626;">Fill</span>
<svg class="abs" style="left:1139.90px;top:92.55px" width="6.2" height="4.1" viewBox="0 0 6.2 4.1"><path d="M1 1 L3.10 3.10 L5.20 1" fill="none" stroke="#3a3a3a" stroke-width="1.2" stroke-linecap="round" stroke-linejoin="round"/></svg>
<svg class="abs" style="left:1110.00px;top:108.00px" width="12.5" height="12.5" viewBox="0 0 12.5 12.5"><path d="M6.8 0.8 L11.6 5.2 L5.6 11.8 L0.9 7.4 Z" fill="#fff" stroke="#a43bb5" stroke-width="1.1" stroke-linejoin="round"/><path d="M3.4 4.8 L8 9.2 L5.6 11.8 L0.9 7.4 Z" fill="#c163d0" stroke="#a43bb5" stroke-width="1" stroke-linejoin="round"/></svg>
<span class="t" style="left:1126.00px;top:108.00px;font-size:9.4px;transform:scaleX(0.9372);transform-origin:0 50%;color:#262626;">Clear</span>
<svg class="abs" style="left:1149.30px;top:112.75px" width="6.2" height="4.1" viewBox="0 0 6.2 4.1"><path d="M1 1 L3.10 3.10 L5.20 1" fill="none" stroke="#3a3a3a" stroke-width="1.2" stroke-linecap="round" stroke-linejoin="round"/></svg>
<svg class="abs" style="left:1195.00px;top:69.00px" width="24" height="22" viewBox="0 0 24 22"><text x="0.5" y="9.5" font-size="10.5" fill="#2b88d8" font-family="Liberation Sans,sans-serif">A</text><text x="1" y="21" font-size="10.5" fill="#444" font-family="Liberation Sans,sans-serif">Z</text><path d="M10 6 H22.5 L18 11 V16.6 L14.6 16.6 V11 Z" fill="#fff" stroke="#555" stroke-width="1" stroke-linejoin="round"/></svg>
<span class="t" style="left:1193.00px;top:94.00px;font-size:9.4px;letter-spacing:0.156px;color:#262626;">Sort &amp;</span>
<span class="t" style="left:1192.00px;top:106.00px;font-size:9.4px;transform:scaleX(0.9595);transform-origin:0 50%;color:#262626;">Filter</span>
<svg class="abs" style="left:1214.70px;top:110.85px" width="5.8" height="3.9" viewBox="0 0 5.8 3.9"><path d="M1 1 L2.90 2.90 L4.80 1" fill="none" stroke="#3a3a3a" stroke-width="1.2" stroke-linecap="round" stroke-linejoin="round"/></svg>
<svg class="abs" style="left:1230.00px;top:68.00px" width="25" height="24" viewBox="0 0 25 24"><circle cx="15.6" cy="8.9" r="7.8" fill="none" stroke="#555" stroke-width="1"/><path d="M10 14.6 L1.2 23" stroke="#555" stroke-width="1.1"/></svg>
<span class="t" style="left:1228.50px;top:94.00px;font-size:9.4px;letter-spacing:0.065px;color:#262626;">Find &amp;</span>
<span class="t" style="left:1226.00px;top:106.00px;font-size:9.4px;transform:scaleX(0.9209);transform-origin:0 50%;color:#262626;">Select</span>
<svg class="abs" style="left:1253.10px;top:110.85px" width="5.8" height="3.9" viewBox="0 0 5.8 3.9"><path d="M1 1 L2.90 2.90 L4.80 1" fill="none" stroke="#3a3a3a" stroke-width="1.2" stroke-linecap="round" stroke-linejoin="round"/></svg>
<span class="t" style="left:1171.00px;top:126.00px;font-size:8.2px;letter-spacing:-0.007px;color:#444;">Editing</span>
<i class="abs" style="left:1267.00px;top:66.00px;width:1.00px;height:69.00px;background:#e1e1e1"></i>
<svg class="abs" style="left:1280.00px;top:69.00px" width="22.5" height="21.6" viewBox="0 0 22.5 21.6"><rect x="0.6" y="0.6" width="21.3" height="20.4" fill="#fff" stroke="#e8633a" stroke-width="1.5"/><rect x="3.6" y="3.4" width="6.2" height="6" fill="none" stroke="#e8633a" stroke-width="1.2"/><rect x="12.6" y="3.4" width="6.2" height="6" fill="none" stroke="#e8633a" stroke-width="1.2"/><rect x="3.6" y="12.4" width="6.2" height="6" fill="none" stroke="#e8633a" stroke-width="1.2"/><rect x="12.6" y="12.4" width="6.2" height="6" fill="none" stroke="#e8633a" stroke-width="1.2"/></svg>
<span class="t" style="left:1275.00px;top:94.00px;font-size:9.4px;letter-spacing:0.100px;color:#262626;">Add-ins</span>
<span class="t" style="left:1277.00px;top:126.00px;font-size:8.2px;letter-spacing:0.033px;color:#444;">Add-ins</span>
<i class="abs" style="left:1315.00px;top:66.00px;width:1.00px;height:69.00px;background:#e1e1e1"></i>
<svg class="abs" style="left:1328.00px;top:69.00px" width="22.5" height="21.8" viewBox="0 0 22.5 21.8"><rect x="0.6" y="0.6" width="21.3" height="20.6" fill="#fff" stroke="#5a5a5a" stroke-width="1.2"/><path d="M0.6 3.4 H21.9" stroke="#5a5a5a" stroke-width="1"/><path d="M0.6 9.4 H21.9 M0.6 15.4 H21.9 M6 15.4 V21 M11.3 15.4 V21 M16.6 3.4 V21" stroke="#b9b9b9" stroke-width="0.9"/><rect x="1.2" y="1.2" width="20" height="1.7" fill="#dcdcdc"/><circle cx="10.4" cy="9.6" r="6.5" fill="#fff" stroke="#505050" stroke-width="1.25"/><rect x="6.3" y="9.4" width="2.1" height="4" fill="#9a9a9a"/><rect x="8.8" y="6.6" width="2.2" height="6.8" fill="#fff" stroke="#8a8a8a" stroke-width="0.6"/><rect x="11.6" y="7.4" width="2.4" height="6" fill="#2b88d8"/><path d="M15.2 14.6 L21.8 21.2" stroke="#505050" stroke-width="1.3"/></svg>
<span class="t" style="left:1323.00px;top:94.00px;font-size:9.4px;transform:scaleX(0.9593);transform-origin:0 50%;color:#262626;">Analyze</span>
<span class="t" style="left:1329.50px;top:106.00px;font-size:9.4px;letter-spacing:-0.078px;color:#262626;">Data</span>
<svg class="abs" style="left:1364.00px;top:68.75px" width="23.5" height="22" viewBox="0 0 23.5 22"><defs><linearGradient id="cpa" x1="0" y1="0" x2="0" y2="1"><stop offset="0" stop-color="#1b8df0"/><stop offset="0.35" stop-color="#1fa0d8"/><stop offset="0.62" stop-color="#6cbb4c"/><stop offset="1" stop-color="#f6d200"/></linearGradient><linearGradient id="cpb" x1="0" y1="0" x2="0" y2="1"><stop offset="0" stop-color="#a259f2"/><stop offset="0.45" stop-color="#ea4a9c"/><stop offset="1" stop-color="#ff9a3a"/></linearGradient></defs><path d="M12.6 0.5 H15 Q17 0.5 17.4 2.4 L18.4 7 H13.4 Z" fill="#1846d2"/><path d="M5.2 15 H10.4 L9.4 21.4 H8.8 Q6.8 21.4 6.4 19.6 Z" fill="#f0452a"/><path d="M6 0.5 H14.4 Q16.4 0.5 15.8 2.5 L12.2 13.5 Q11.5 15.6 9.3 15.6 H3 Q0 15.6 0.8 12.6 L3.2 3.6 Q4 0.5 6 0.5 Z" fill="url(#cpa)"/><path d="M14 6.4 H20.2 Q23.4 6.4 22.5 9.5 L20 18.4 Q19.1 21.4 16.5 21.4 H9.6 Q7.4 21.4 8.2 19.2 L11.4 8.6 Q12 6.4 14 6.4 Z" fill="url(#cpb)"/><path d="M10.4 15 L13.3 6.6" stroke="#fff" stroke-width="2.1" stroke-linecap="round"/></svg>
<span class="t" style="left:1360.00px;top:94.00px;font-size:9.4px;letter-spacing:0.188px;color:#262626;">Copilot</span>
<i class="abs" style="left:1398.00px;top:66.00px;width:1.00px;height:69.00px;background:#e1e1e1"></i>
<svg class="abs" style="left:1421.00px;top:70.00px" width="22" height="22.5" viewBox="0 0 22 22.5"><path d="M10.6 18.6 H3 Q1 18.6 1 16.6 V2.7 Q1 0.7 3 0.7 H11.3 L15.6 5 V10.8" fill="none" stroke="#4a7df0" stroke-width="1.35" stroke-linejoin="round"/><path d="M7.4 4.6 V7.6 Q7.2 10.6 4 12.4 M7.5 8 Q9.4 10 12.4 10.4" fill="none" stroke="#4a7df0" stroke-width="1.1" stroke-linecap="round"/><g fill="none" stroke="#4a7df0" stroke-width="1.45" transform="rotate(-40 15 16.6)"><rect x="8.6" y="14.5" width="7" height="4.2" rx="2.1"/><rect x="14.2" y="14.5" width="7" height="4.2" rx="2.1"/></g></svg>
<span class="t" style="left:1415.00px;top:94.00px;font-size:9.4px;transform:scaleX(0.9417);transform-origin:0 50%;color:#262626;">Create</span>
<span class="t" style="left:1417.00px;top:106.00px;font-size:9.4px;transform:scaleX(0.9030);transform-origin:0 50%;color:#262626;">a PDF</span>
<span class="t" style="left:1401.00px;top:126.00px;font-size:8.2px;letter-spacing:0.099px;color:#444;">Adobe Acrobat</span>
<i class="abs" style="left:1458.50px;top:66.00px;width:1.00px;height:69.00px;background:#e1e1e1"></i>
<svg class="abs" style="left:1469.50px;top:71.50px" width="24" height="17" viewBox="0 0 24 17"><defs><linearGradient id="slv" x1="0" y1="0" x2="1" y2="1"><stop offset="0" stop-color="#4f9ede"/><stop offset="1" stop-color="#1f76bd"/></linearGradient></defs><path d="M2.4 0.8 L17 1.6 L16.4 9 L3.4 8.6 Z" fill="#a5d3f2"/><path d="M23.6 2.6 L15 3.6 L14.4 13 L22.4 11.8 Z" fill="#6db6e6" opacity="0.95"/><path d="M0.4 4.6 L10.4 4 L14.6 6 L13.6 13 L2.4 14.4 Z" fill="url(#slv)"/><circle cx="13.8" cy="8" r="4" fill="#f4e838" stroke="#c9bb26" stroke-width="0.6"/><circle cx="12.8" cy="6.8" r="1.5" fill="#fbf6a8"/><path d="M13 8 L13.8 10.6 L14.6 8" fill="none" stroke="#8a7f20" stroke-width="0.5"/><rect x="12.3" y="11.8" width="3" height="2.9" rx="0.7" fill="#4a4a4a"/></svg>
<span class="t" style="left:1469.00px;top:94.00px;font-size:9.4px;transform:scaleX(0.9406);transform-origin:0 50%;color:#262626;">Solver</span>
<span class="t" style="left:1470.00px;top:126.00px;font-size:8.2px;transform:scaleX(0.9475);transform-origin:0 50%;color:#444;">Solver</span>
<i class="abs" style="left:1503.50px;top:66.00px;width:1.00px;height:69.00px;background:#e1e1e1"></i>
<svg class="abs" style="left:1577.00px;top:126.30px" width="10.0" height="6.0" viewBox="0 0 10.0 6.0"><path d="M1 1 L5.00 5.00 L9.00 1" fill="none" stroke="#333" stroke-width="1.0" stroke-linecap="round" stroke-linejoin="round"/></svg>
<div id="sheet"></div>
<div id="grid">
<div class="colhdr">
<span class="ch" style="left:17.50px;width:123.00px">A</span>
<span class="ch" style="left:140.50px;width:75.50px">B</span>
<span class="ch" style="left:216.00px;width:57.50px">C</span>
<span class="ch" style="left:273.50px;width:64.50px">D</span>
<span class="ch" style="left:338.00px;width:84.50px">E</span>
<span class="ch" style="left:422.50px;width:64.50px">F</span>
<span class="ch" style="left:487.00px;width:65.50px">G</span>
<span class="ch" style="left:552.50px;width:61.00px">H</span>
<span class="ch" style="left:613.50px;width:43.50px">J</span>
<span class="ch" style="left:657.00px;width:68.75px">O</span>
<span class="ch" style="left:725.75px;width:62.25px">P</span>
<span class="ch" style="left:788.00px;width:44.50px">Q</span>
<span class="ch" style="left:832.50px;width:56.50px">R</span>
<span class="ch" style="left:889.00px;width:42.00px">S</span>
<span class="ch" style="left:931.00px;width:43.00px">T</span>
<span class="ch" style="left:974.00px;width:42.50px">U</span>
<span class="ch" style="left:1016.50px;width:42.50px">V</span>
<span class="ch" style="left:1059.00px;width:42.50px">W</span>
<span class="ch" style="left:1101.50px;width:42.50px">X</span>
<span class="ch" style="left:1144.00px;width:42.50px">Y</span>
<span class="ch" style="left:1186.50px;width:42.50px">Z</span>
<span class="ch" style="left:1229.00px;width:42.50px;letter-spacing:-0.6px">AA</span>
<span class="ch" style="left:1271.50px;width:42.50px;letter-spacing:-0.6px">AB</span>
<span class="ch" style="left:1314.00px;width:42.50px;letter-spacing:-0.6px">AC</span>
<span class="ch" style="left:1356.50px;width:42.50px;letter-spacing:-0.6px">AD</span>
<span class="ch" style="left:1399.00px;width:42.50px;letter-spacing:-0.6px">AE</span>
<span class="ch" style="left:1441.50px;width:42.50px;letter-spacing:-0.6px">AF</span>
<span class="ch" style="left:1484.00px;width:42.50px;letter-spacing:-0.6px">AG</span>
<span class="ch" style="left:1526.50px;width:42.50px;letter-spacing:-0.6px">AH</span>
<span class="ch" style="left:1569.00px;width:15.00px;letter-spacing:-0.6px"></span>
</div>
<i class="cs" style="left:140.00px"></i>
<i class="cs" style="left:215.50px"></i>
<i class="cs" style="left:273.00px"></i>
<i class="cs" style="left:337.50px"></i>
<i class="cs" style="left:422.00px"></i>
<i class="cs" style="left:486.50px"></i>
<i class="cs" style="left:552.00px"></i>
<i class="cs" style="left:613.00px"></i>
<i class="cs" style="left:656.50px"></i>
<i class="cs" style="left:725.25px"></i>
<i class="cs" style="left:787.50px"></i>
<i class="cs" style="left:832.00px"></i>
<i class="cs" style="left:888.50px"></i>
<i class="cs" style="left:930.50px"></i>
<i class="cs" style="left:973.50px"></i>
<i class="cs" style="left:1016.00px"></i>
<i class="cs" style="left:1058.50px"></i>
<i class="cs" style="left:1101.00px"></i>
<i class="cs" style="left:1143.50px"></i>
<i class="cs" style="left:1186.00px"></i>
<i class="cs" style="left:1228.50px"></i>
<i class="cs" style="left:1271.00px"></i>
<i class="cs" style="left:1313.50px"></i>
<i class="cs" style="left:1356.00px"></i>
<i class="cs" style="left:1398.50px"></i>
<i class="cs" style="left:1441.00px"></i>
<i class="cs" style="left:1483.50px"></i>
<i class="cs" style="left:1526.00px"></i>
<i class="cs" style="left:1568.50px"></i>
<i class="cs" style="left:655px"></i>
<div class="rowhdr">
<span class="rh" style="top:3.50px;height:12.5px;line-height:14.4px">1</span>
<span class="rh" style="top:16.50px;height:12.5px;line-height:14.4px">2</span>
<span class="rh" style="top:29.50px;height:12.5px;line-height:14.4px">3</span>
<span class="rh" style="top:42.00px;height:12.5px;line-height:14.4px">4</span>
<span class="rh" style="top:54.50px;height:12.5px;line-height:14.4px">5</span>
<span class="rh" style="top:67.00px;height:12.5px;line-height:14.4px">6</span>
<span class="rh" style="top:79.50px;height:12.5px;line-height:14.4px">7</span>
<span class="rh" style="top:92.00px;height:12.5px;line-height:14.4px">8</span>
<span class="rh" style="top:105.00px;height:12.5px;line-height:14.4px">9</span>
<span class="rh" style="top:130.50px;height:12.5px;line-height:14.4px">10</span>
<span class="rh" style="top:143.00px;height:12.5px;line-height:14.4px">11</span>
<span class="rh" style="top:155.50px;height:12.5px;line-height:14.4px">12</span>
<span class="rh" style="top:168.00px;height:12.5px;line-height:14.4px">13</span>
<span class="rh" style="top:180.50px;height:12.5px;line-height:14.4px">14</span>
<span class="rh" style="top:193.00px;height:12.5px;line-height:14.4px">15</span>
<span class="rh" style="top:205.50px;height:12.5px;line-height:14.4px">16</span>
<span class="rh" style="top:218.00px;height:12.5px;line-height:14.4px">17</span>
<span class="rh" style="top:230.50px;height:12.5px;line-height:14.4px">18</span>
<span class="rh" style="top:243.00px;height:12.5px;line-height:14.4px">19</span>
<span class="rh" style="top:255.50px;height:12.5px;line-height:14.4px">20</span>
<span class="rh" style="top:268.00px;height:12.5px;line-height:14.4px">21</span>
<span class="rh" style="top:280.50px;height:12.5px;line-height:14.4px">22</span>
<span class="rh" style="top:293.00px;height:12.5px;line-height:14.4px">23</span>
<span class="rh" style="top:305.50px;height:12.5px;line-height:14.4px">24</span>
<span class="rh" style="top:318.00px;height:12.5px;line-height:14.4px">25</span>
<span class="rh" style="top:330.50px;height:12.5px;line-height:14.4px">26</span>
<span class="rh" style="top:343.00px;height:12.5px;line-height:14.4px">27</span>
<span class="rh" style="top:355.50px;height:12.5px;line-height:14.4px">28</span>
<span class="rh" style="top:368.00px;height:12.5px;line-height:14.4px">29</span>
<span class="rh" style="top:380.50px;height:12.5px;line-height:14.4px">30</span>
<span class="rh" style="top:393.00px;height:12.5px;line-height:14.4px">31</span>
<span class="rh" style="top:405.50px;height:12.5px;line-height:14.4px">32</span>
<span class="rh" style="top:418.00px;height:12.5px;line-height:14.4px">33</span>
<span class="rh" style="top:430.50px;height:12.5px;line-height:14.4px">34</span>
<span class="rh" style="top:443.00px;height:12.5px;line-height:14.4px">35</span>
<span class="rh" style="top:455.50px;height:12.5px;line-height:14.4px">36</span>
<span class="rh" style="top:468.00px;height:12.5px;line-height:14.4px">37</span>
<span class="rh" style="top:480.50px;height:12.5px;line-height:14.4px">38</span>
<span class="rh" style="top:493.00px;height:12.5px;line-height:14.4px">39</span>
<span class="rh" style="top:505.50px;height:12.5px;line-height:14.4px">40</span>
<span class="rh" style="top:518.00px;height:12.5px;line-height:14.4px">41</span>
<span class="rh" style="top:530.50px;height:12.5px;line-height:14.4px">42</span>
<span class="rh" style="top:543.00px;height:12.5px;line-height:14.4px">43</span>
<span class="rh" style="top:555.50px;height:12.5px;line-height:14.4px">44</span>
<span class="rh" style="top:568.00px;height:12.5px;line-height:14.4px">45</span>
<span class="rh" style="top:580.50px;height:12.5px;line-height:14.4px">46</span>
<span class="rh" style="top:593.00px;height:12.5px;line-height:14.4px">47</span>
<span class="rh" style="top:605.50px;height:12.5px;line-height:14.4px">48</span>
<span class="rh" style="top:618.00px;height:12.5px;line-height:14.4px">49</span>
<span class="rh" style="top:630.50px;height:12.5px;line-height:14.4px">50</span>
</div>
<i class="rs" style="top:198.00px"></i>
<i class="rs" style="top:211.00px"></i>
<i class="rs" style="top:224.00px"></i>
<i class="rs" style="top:236.50px"></i>
<i class="rs" style="top:249.00px"></i>
<i class="rs" style="top:261.50px"></i>
<i class="rs" style="top:274.00px"></i>
<i class="rs" style="top:286.50px"></i>
<i class="rs" style="top:299.50px"></i>
<i class="rs" style="top:325.00px"></i>
<i class="rs" style="top:337.50px"></i>
<i class="rs" style="top:350.00px"></i>
<i class="rs" style="top:362.50px"></i>
<i class="rs" style="top:375.00px"></i>
<i class="rs" style="top:387.50px"></i>
<i class="rs" style="top:400.00px"></i>
<i class="rs" style="top:412.50px"></i>
<i class="rs" style="top:425.00px"></i>
<i class="rs" style="top:437.50px"></i>
<i class="rs" style="top:450.00px"></i>
<i class="rs" style="top:462.50px"></i>
<i class="rs" style="top:475.00px"></i>
<i class="rs" style="top:487.50px"></i>
<i class="rs" style="top:500.00px"></i>
<i class="rs" style="top:512.50px"></i>
<i class="rs" style="top:525.00px"></i>
<i class="rs" style="top:537.50px"></i>
<i class="rs" style="top:550.00px"></i>
<i class="rs" style="top:562.50px"></i>
<i class="rs" style="top:575.00px"></i>
<i class="rs" style="top:587.50px"></i>
<i class="rs" style="top:600.00px"></i>
<i class="rs" style="top:612.50px"></i>
<i class="rs" style="top:625.00px"></i>
<i class="rs" style="top:637.50px"></i>
<i class="rs" style="top:650.00px"></i>
<i class="rs" style="top:662.50px"></i>
<i class="rs" style="top:675.00px"></i>
<i class="rs" style="top:687.50px"></i>
<i class="rs" style="top:700.00px"></i>
<i class="rs" style="top:712.50px"></i>
<i class="rs" style="top:725.00px"></i>
<i class="rs" style="top:737.50px"></i>
<i class="rs" style="top:750.00px"></i>
<i class="rs" style="top:762.50px"></i>
<i class="rs" style="top:775.00px"></i>
<i class="rs" style="top:787.50px"></i>
<i class="rs" style="top:800.00px"></i>
<i class="rs" style="top:812.50px"></i>
<i class="rs" style="top:825.00px"></i>
<span class="c title" style="left:17.50px;top:182.50px;width:320.50px;height:16.00px;line-height:17.00px;">Debt Schedule</span>
<span class="c l" style="left:17.50px;top:211.50px;width:123.00px;height:13.00px;line-height:14.00px;">Financed Amount</span>
<span class="c ctr gray" style="left:140.50px;top:211.50px;width:75.50px;height:13.00px;line-height:14.00px;">$1,000,000</span>
<span class="c l" style="left:17.50px;top:224.50px;width:123.00px;height:12.50px;line-height:15.30px;">Loan Term</span>
<span class="c ctr yel" style="left:140.50px;top:224.50px;width:75.50px;height:12.50px;line-height:15.30px;">30</span>
<span class="c l" style="left:17.50px;top:237.00px;width:123.00px;height:12.50px;line-height:15.30px;">Starting Annual Interest Rate</span>
<span class="c ctr yel" style="left:140.50px;top:237.00px;width:75.50px;height:12.50px;line-height:15.30px;">5.00%</span>
<span class="c l" style="left:17.50px;top:249.50px;width:123.00px;height:12.50px;line-height:15.30px;">Payment per Year</span>
<span class="c ctr yel" style="left:140.50px;top:249.50px;width:75.50px;height:12.50px;line-height:15.30px;">12</span>
<span class="c l" style="left:17.50px;top:262.00px;width:123.00px;height:12.50px;line-height:15.30px;">First Payment Date</span>
<span class="c ctr yel" style="left:140.50px;top:262.00px;width:75.50px;height:12.50px;line-height:15.30px;">1-Jan-20</span>
<span class="c r" style="left:216.00px;top:211.50px;width:122.00px;height:13.00px;line-height:14.00px;padding-right:4.6px">Total Interest</span>
<span class="c r acc egray" style="left:338.00px;top:211.50px;width:84.50px;height:13.00px;line-height:14.00px;"><b class="ds">$</b>932,558</span>
<span class="c r" style="left:216.00px;top:224.50px;width:122.00px;height:12.50px;line-height:15.30px;padding-right:1.4px">Total Principal</span>
<span class="c r acc egray" style="left:338.00px;top:224.50px;width:84.50px;height:12.50px;line-height:15.30px;"><b class="ds">$</b>1,000,000</span>
<span class="c r" style="left:216.00px;top:237.00px;width:122.00px;height:12.50px;line-height:15.30px;padding-right:1.4px">Total Paid Back</span>
<span class="c r acc egray" style="left:338.00px;top:237.00px;width:84.50px;height:12.50px;line-height:15.30px;"><b class="ds">$</b>1,932,558</span>
<span class="c ctr yelbox" style="left:725.75px;top:198.50px;width:205.25px;height:26.00px;line-height:26.00px">Adjust cells in this shade only.</span>
<span class="c th " style="left:17.50px;top:300px;width:123.00px;height:25.5px"><span style="letter-spacing:0.013px;margin-right:-0.013px">Payment Number</span></span>
<span class="c th " style="left:140.50px;top:300px;width:75.50px;height:25.5px"><span style="letter-spacing:-0.335px;margin-right:0.335px">PAYMENT</span></span>
<span class="c th " style="left:216.00px;top:300px;width:57.50px;height:25.5px"><span style="letter-spacing:-0.736px;margin-right:0.736px">INTEREST</span></span>
<span class="c th " style="left:273.50px;top:300px;width:64.50px;height:25.5px"><span style="letter-spacing:-0.495px;margin-right:0.495px">PRINCIPAL</span></span>
<span class="c th " style="left:338.00px;top:300px;width:84.50px;height:25.5px"><span style="letter-spacing:-0.527px;margin-right:0.527px">BALANCE</span></span>
<span class="c th two" style="left:422.50px;top:300px;width:64.50px;height:25.5px"><span style="letter-spacing:-0.206px;margin-right:0.206px">TOTAL</span><br><span style="letter-spacing:-0.643px;margin-right:0.643px">INTEREST</span></span>
<span class="c th " style="left:487.00px;top:300px;width:65.50px;height:25.5px"><span style="letter-spacing:-0.148px;margin-right:0.148px">TOTAL PAID</span></span>
<span class="c th " style="left:552.50px;top:300px;width:61.00px;height:25.5px"><span style="letter-spacing:0.136px;margin-right:-0.136px">Variable&nbsp; Rate</span></span>
<span class="c th " style="left:613.50px;top:300px;width:43.50px;height:25.5px"><span style="letter-spacing:0.125px;margin-right:-0.125px">Date</span></span>
<span class="c ctr" style="left:17.50px;top:325.50px;width:123.00px;height:12.50px;line-height:15.30px;">0</span>
<span class="c r acc" style="left:338.00px;top:325.50px;width:84.50px;height:12.50px;line-height:15.30px;">$1,000,000</span>
<span class="c ctr" style="left:17.50px;top:338.00px;width:123.00px;height:12.50px;line-height:15.30px;">1</span>
<span class="c r p4" style="left:140.50px;top:338.00px;width:75.50px;height:12.50px;line-height:15.30px;">$5,368.22</span>
<span class="c r p4" style="left:216.00px;top:338.00px;width:57.50px;height:12.50px;line-height:15.30px;">$4,166.67</span>
<span class="c r p4" style="left:273.50px;top:338.00px;width:64.50px;height:12.50px;line-height:15.30px;">$1,201.55</span>
<span class="c r acc" style="left:338.00px;top:338.00px;width:84.50px;height:12.50px;line-height:15.30px;"><b class="ds">$</b>998,798.45</span>
<span class="c r p4" style="left:422.50px;top:338.00px;width:64.50px;height:12.50px;line-height:15.30px;">$4,166.67</span>
<span class="c r p4" style="left:487.00px;top:338.00px;width:65.50px;height:12.50px;line-height:15.30px;">$5,368.22</span>
<span class="c r p2" style="left:552.50px;top:338.00px;width:61.00px;height:12.50px;line-height:15.30px;">5.00%</span>
<span class="c r p2" style="left:613.50px;top:338.00px;width:43.50px;height:12.50px;line-height:15.30px;">1-Jan-20</span>
<span class="c ctr" style="left:17.50px;top:350.50px;width:123.00px;height:12.50px;line-height:15.30px;">2</span>
<span class="c r p4" style="left:140.50px;top:350.50px;width:75.50px;height:12.50px;line-height:15.30px;">$5,368.22</span>
<span class="c r p4" style="left:216.00px;top:350.50px;width:57.50px;height:12.50px;line-height:15.30px;">$4,161.66</span>
<span class="c r p4" style="left:273.50px;top:350.50px;width:64.50px;height:12.50px;line-height:15.30px;">$1,206.56</span>
<span class="c r acc" style="left:338.00px;top:350.50px;width:84.50px;height:12.50px;line-height:15.30px;"><b class="ds">$</b>997,591.89</span>
<span class="c r p4" style="left:422.50px;top:350.50px;width:64.50px;height:12.50px;line-height:15.30px;">$8,328.33</span>
<span class="c r p4" style="left:487.00px;top:350.50px;width:65.50px;height:12.50px;line-height:15.30px;">$10,736.43</span>
<span class="c r p2" style="left:552.50px;top:350.50px;width:61.00px;height:12.50px;line-height:15.30px;">5.00%</span>
<span class="c r p2" style="left:613.50px;top:350.50px;width:43.50px;height:12.50px;line-height:15.30px;">1-Feb-20</span>
<span class="c ctr" style="left:17.50px;top:363.00px;width:123.00px;height:12.50px;line-height:15.30px;">3</span>
<span class="c r p4" style="left:140.50px;top:363.00px;width:75.50px;height:12.50px;line-height:15.30px;">$5,368.22</span>
<span class="c r p4" style="left:216.00px;top:363.00px;width:57.50px;height:12.50px;line-height:15.30px;">$4,156.63</span>
<span class="c r p4" style="left:273.50px;top:363.00px;width:64.50px;height:12.50px;line-height:15.30px;">$1,211.58</span>
<span class="c r acc" style="left:338.00px;top:363.00px;width:84.50px;height:12.50px;line-height:15.30px;"><b class="ds">$</b>996,380.31</span>
<span class="c r p4" style="left:422.50px;top:363.00px;width:64.50px;height:12.50px;line-height:15.30px;">$12,484.96</span>
<span class="c r p4" style="left:487.00px;top:363.00px;width:65.50px;height:12.50px;line-height:15.30px;">$16,104.65</span>
<span class="c r p2" style="left:552.50px;top:363.00px;width:61.00px;height:12.50px;line-height:15.30px;">5.00%</span>
<span class="c r p2" style="left:613.50px;top:363.00px;width:43.50px;height:12.50px;line-height:15.30px;">1-Mar-20</span>
<span class="c ctr" style="left:17.50px;top:375.50px;width:123.00px;height:12.50px;line-height:15.30px;">4</span>
<span class="c r p4" style="left:140.50px;top:375.50px;width:75.50px;height:12.50px;line-height:15.30px;">$5,368.22</span>
<span class="c r p4" style="left:216.00px;top:375.50px;width:57.50px;height:12.50px;line-height:15.30px;">$4,151.58</span>
<span class="c r p4" style="left:273.50px;top:375.50px;width:64.50px;height:12.50px;line-height:15.30px;">$1,216.63</span>
<span class="c r acc" style="left:338.00px;top:375.50px;width:84.50px;height:12.50px;line-height:15.30px;"><b class="ds">$</b>995,163.68</span>
<span class="c r p4" style="left:422.50px;top:375.50px;width:64.50px;height:12.50px;line-height:15.30px;">$16,636.54</span>
<span class="c r p4" style="left:487.00px;top:375.50px;width:65.50px;height:12.50px;line-height:15.30px;">$21,472.86</span>
<span class="c r p2" style="left:552.50px;top:375.50px;width:61.00px;height:12.50px;line-height:15.30px;">5.00%</span>
<span class="c r p2" style="left:613.50px;top:375.50px;width:43.50px;height:12.50px;line-height:15.30px;">1-Apr-20</span>
<span class="c ctr" style="left:17.50px;top:388.00px;width:123.00px;height:12.50px;line-height:15.30px;">5</span>
<span class="c r p4" style="left:140.50px;top:388.00px;width:75.50px;height:12.50px;line-height:15.30px;">$5,368.22</span>
<span class="c r p4" style="left:216.00px;top:388.00px;width:57.50px;height:12.50px;line-height:15.30px;">$4,146.52</span>
<span class="c r p4" style="left:273.50px;top:388.00px;width:64.50px;height:12.50px;line-height:15.30px;">$1,221.70</span>
<span class="c r acc" style="left:338.00px;top:388.00px;width:84.50px;height:12.50px;line-height:15.30px;"><b class="ds">$</b>993,941.98</span>
<span class="c r p4" style="left:422.50px;top:388.00px;width:64.50px;height:12.50px;line-height:15.30px;">$20,783.06</span>
<span class="c r p4" style="left:487.00px;top:388.00px;width:65.50px;height:12.50px;line-height:15.30px;">$26,841.08</span>
<span class="c r p2" style="left:552.50px;top:388.00px;width:61.00px;height:12.50px;line-height:15.30px;">5.00%</span>
<span class="c r p2" style="left:613.50px;top:388.00px;width:43.50px;height:12.50px;line-height:15.30px;">1-May-20</span>
<span class="c ctr" style="left:17.50px;top:400.50px;width:123.00px;height:12.50px;line-height:15.30px;">6</span>
<span class="c r p4" style="left:140.50px;top:400.50px;width:75.50px;height:12.50px;line-height:15.30px;">$5,368.22</span>
<span class="c r p4" style="left:216.00px;top:400.50px;width:57.50px;height:12.50px;line-height:15.30px;">$4,141.42</span>
<span class="c r p4" style="left:273.50px;top:400.50px;width:64.50px;height:12.50px;line-height:15.30px;">$1,226.79</span>
<span class="c r acc" style="left:338.00px;top:400.50px;width:84.50px;height:12.50px;line-height:15.30px;"><b class="ds">$</b>992,715.19</span>
<span class="c r p4" style="left:422.50px;top:400.50px;width:64.50px;height:12.50px;line-height:15.30px;">$24,924.48</span>
<span class="c r p4" style="left:487.00px;top:400.50px;width:65.50px;height:12.50px;line-height:15.30px;">$32,209.30</span>
<span class="c r p2" style="left:552.50px;top:400.50px;width:61.00px;height:12.50px;line-height:15.30px;">5.00%</span>
<span class="c r p2" style="left:613.50px;top:400.50px;width:43.50px;height:12.50px;line-height:15.30px;">1-Jun-20</span>
<span class="c ctr" style="left:17.50px;top:413.00px;width:123.00px;height:12.50px;line-height:15.30px;">7</span>
<span class="c r p4" style="left:140.50px;top:413.00px;width:75.50px;height:12.50px;line-height:15.30px;">$5,368.22</span>
<span class="c r p4" style="left:216.00px;top:413.00px;width:57.50px;height:12.50px;line-height:15.30px;">$4,136.31</span>
<span class="c r p4" style="left:273.50px;top:413.00px;width:64.50px;height:12.50px;line-height:15.30px;">$1,231.90</span>
<span class="c r acc" style="left:338.00px;top:413.00px;width:84.50px;height:12.50px;line-height:15.30px;"><b class="ds">$</b>991,483.28</span>
<span class="c r p4" style="left:422.50px;top:413.00px;width:64.50px;height:12.50px;line-height:15.30px;">$29,060.80</span>
<span class="c r p4" style="left:487.00px;top:413.00px;width:65.50px;height:12.50px;line-height:15.30px;">$37,577.51</span>
<span class="c r p2" style="left:552.50px;top:413.00px;width:61.00px;height:12.50px;line-height:15.30px;">5.00%</span>
<span class="c r p2" style="left:613.50px;top:413.00px;width:43.50px;height:12.50px;line-height:15.30px;">1-Jul-20</span>
<span class="c ctr" style="left:17.50px;top:425.50px;width:123.00px;height:12.50px;line-height:15.30px;">8</span>
<span class="c r p4" style="left:140.50px;top:425.50px;width:75.50px;height:12.50px;line-height:15.30px;">$5,368.22</span>
<span class="c r p4" style="left:216.00px;top:425.50px;width:57.50px;height:12.50px;line-height:15.30px;">$4,131.18</span>
<span class="c r p4" style="left:273.50px;top:425.50px;width:64.50px;height:12.50px;line-height:15.30px;">$1,237.04</span>
<span class="c r acc" style="left:338.00px;top:425.50px;width:84.50px;height:12.50px;line-height:15.30px;"><b class="ds">$</b>990,246.25</span>
<span class="c r p4" style="left:422.50px;top:425.50px;width:64.50px;height:12.50px;line-height:15.30px;">$33,191.98</span>
<span class="c r p4" style="left:487.00px;top:425.50px;width:65.50px;height:12.50px;line-height:15.30px;">$42,945.73</span>
<span class="c r p2" style="left:552.50px;top:425.50px;width:61.00px;height:12.50px;line-height:15.30px;">5.00%</span>
<span class="c r p2" style="left:613.50px;top:425.50px;width:43.50px;height:12.50px;line-height:15.30px;">1-Aug-20</span>
<span class="c ctr" style="left:17.50px;top:438.00px;width:123.00px;height:12.50px;line-height:15.30px;">9</span>
<span class="c r p4" style="left:140.50px;top:438.00px;width:75.50px;height:12.50px;line-height:15.30px;">$5,368.22</span>
<span class="c r p4" style="left:216.00px;top:438.00px;width:57.50px;height:12.50px;line-height:15.30px;">$4,126.03</span>
<span class="c r p4" style="left:273.50px;top:438.00px;width:64.50px;height:12.50px;line-height:15.30px;">$1,242.19</span>
<span class="c r acc" style="left:338.00px;top:438.00px;width:84.50px;height:12.50px;line-height:15.30px;"><b class="ds">$</b>989,004.06</span>
<span class="c r p4" style="left:422.50px;top:438.00px;width:64.50px;height:12.50px;line-height:15.30px;">$37,318.00</span>
<span class="c r p4" style="left:487.00px;top:438.00px;width:65.50px;height:12.50px;line-height:15.30px;">$48,313.95</span>
<span class="c r p2" style="left:552.50px;top:438.00px;width:61.00px;height:12.50px;line-height:15.30px;">5.00%</span>
<span class="c r p2" style="left:613.50px;top:438.00px;width:43.50px;height:12.50px;line-height:15.30px;">1-Sep-20</span>
<span class="c ctr" style="left:17.50px;top:450.50px;width:123.00px;height:12.50px;line-height:15.30px;">10</span>
<span class="c r p4" style="left:140.50px;top:450.50px;width:75.50px;height:12.50px;line-height:15.30px;">$5,368.22</span>
<span class="c r p4" style="left:216.00px;top:450.50px;width:57.50px;height:12.50px;line-height:15.30px;">$4,120.85</span>
<span class="c r p4" style="left:273.50px;top:450.50px;width:64.50px;height:12.50px;line-height:15.30px;">$1,247.37</span>
<span class="c r acc" style="left:338.00px;top:450.50px;width:84.50px;height:12.50px;line-height:15.30px;"><b class="ds">$</b>987,756.69</span>
<span class="c r p4" style="left:422.50px;top:450.50px;width:64.50px;height:12.50px;line-height:15.30px;">$41,438.85</span>
<span class="c r p4" style="left:487.00px;top:450.50px;width:65.50px;height:12.50px;line-height:15.30px;">$53,682.16</span>
<span class="c r p2" style="left:552.50px;top:450.50px;width:61.00px;height:12.50px;line-height:15.30px;">5.00%</span>
<span class="c r p2" style="left:613.50px;top:450.50px;width:43.50px;height:12.50px;line-height:15.30px;">1-Oct-20</span>
<span class="c ctr" style="left:17.50px;top:463.00px;width:123.00px;height:12.50px;line-height:15.30px;">11</span>
<span class="c r p4" style="left:140.50px;top:463.00px;width:75.50px;height:12.50px;line-height:15.30px;">$5,368.22</span>
<span class="c r p4" style="left:216.00px;top:463.00px;width:57.50px;height:12.50px;line-height:15.30px;">$4,115.65</span>
<span class="c r p4" style="left:273.50px;top:463.00px;width:64.50px;height:12.50px;line-height:15.30px;">$1,252.56</span>
<span class="c r acc" style="left:338.00px;top:463.00px;width:84.50px;height:12.50px;line-height:15.30px;"><b class="ds">$</b>986,504.13</span>
<span class="c r p4" style="left:422.50px;top:463.00px;width:64.50px;height:12.50px;line-height:15.30px;">$45,554.51</span>
<span class="c r p4" style="left:487.00px;top:463.00px;width:65.50px;height:12.50px;line-height:15.30px;">$59,050.38</span>
<span class="c r p2" style="left:552.50px;top:463.00px;width:61.00px;height:12.50px;line-height:15.30px;">5.00%</span>
<span class="c r p2" style="left:613.50px;top:463.00px;width:43.50px;height:12.50px;line-height:15.30px;">1-Nov-20</span>
<span class="c ctr" style="left:17.50px;top:475.50px;width:123.00px;height:12.50px;line-height:15.30px;">12</span>
<span class="c r p4" style="left:140.50px;top:475.50px;width:75.50px;height:12.50px;line-height:15.30px;">$5,368.22</span>
<span class="c r p4" style="left:216.00px;top:475.50px;width:57.50px;height:12.50px;line-height:15.30px;">$4,110.43</span>
<span class="c r p4" style="left:273.50px;top:475.50px;width:64.50px;height:12.50px;line-height:15.30px;">$1,257.78</span>
<span class="c r acc" style="left:338.00px;top:475.50px;width:84.50px;height:12.50px;line-height:15.30px;"><b class="ds">$</b>985,246.35</span>
<span class="c r p4" style="left:422.50px;top:475.50px;width:64.50px;height:12.50px;line-height:15.30px;">$49,664.94</span>
<span class="c r p4" style="left:487.00px;top:475.50px;width:65.50px;height:12.50px;line-height:15.30px;">$64,418.59</span>
<span class="c r p2" style="left:552.50px;top:475.50px;width:61.00px;height:12.50px;line-height:15.30px;">5.00%</span>
<span class="c r p2" style="left:613.50px;top:475.50px;width:43.50px;height:12.50px;line-height:15.30px;">1-Dec-20</span>
<span class="c ctr" style="left:17.50px;top:488.00px;width:123.00px;height:12.50px;line-height:15.30px;">13</span>
<span class="c r p4" style="left:140.50px;top:488.00px;width:75.50px;height:12.50px;line-height:15.30px;">$5,368.22</span>
<span class="c r p4" style="left:216.00px;top:488.00px;width:57.50px;height:12.50px;line-height:15.30px;">$4,105.19</span>
<span class="c r p4" style="left:273.50px;top:488.00px;width:64.50px;height:12.50px;line-height:15.30px;">$1,263.02</span>
<span class="c r acc" style="left:338.00px;top:488.00px;width:84.50px;height:12.50px;line-height:15.30px;"><b class="ds">$</b>983,983.32</span>
<span class="c r p4" style="left:422.50px;top:488.00px;width:64.50px;height:12.50px;line-height:15.30px;">$53,770.13</span>
<span class="c r p4" style="left:487.00px;top:488.00px;width:65.50px;height:12.50px;line-height:15.30px;">$69,786.81</span>
<span class="c r p2" style="left:552.50px;top:488.00px;width:61.00px;height:12.50px;line-height:15.30px;">5.00%</span>
<span class="c r p2" style="left:613.50px;top:488.00px;width:43.50px;height:12.50px;line-height:15.30px;">1-Jan-21</span>
<span class="c ctr" style="left:17.50px;top:500.50px;width:123.00px;height:12.50px;line-height:15.30px;">14</span>
<span class="c r p4" style="left:140.50px;top:500.50px;width:75.50px;height:12.50px;line-height:15.30px;">$5,368.22</span>
<span class="c r p4" style="left:216.00px;top:500.50px;width:57.50px;height:12.50px;line-height:15.30px;">$4,099.93</span>
<span class="c r p4" style="left:273.50px;top:500.50px;width:64.50px;height:12.50px;line-height:15.30px;">$1,268.29</span>
<span class="c r acc" style="left:338.00px;top:500.50px;width:84.50px;height:12.50px;line-height:15.30px;"><b class="ds">$</b>982,715.04</span>
<span class="c r p4" style="left:422.50px;top:500.50px;width:64.50px;height:12.50px;line-height:15.30px;">$57,870.06</span>
<span class="c r p4" style="left:487.00px;top:500.50px;width:65.50px;height:12.50px;line-height:15.30px;">$75,155.03</span>
<span class="c r p2" style="left:552.50px;top:500.50px;width:61.00px;height:12.50px;line-height:15.30px;">5.00%</span>
<span class="c r p2" style="left:613.50px;top:500.50px;width:43.50px;height:12.50px;line-height:15.30px;">1-Feb-21</span>
<span class="c ctr" style="left:17.50px;top:513.00px;width:123.00px;height:12.50px;line-height:15.30px;">15</span>
<span class="c r p4" style="left:140.50px;top:513.00px;width:75.50px;height:12.50px;line-height:15.30px;">$5,368.22</span>
<span class="c r p4" style="left:216.00px;top:513.00px;width:57.50px;height:12.50px;line-height:15.30px;">$4,094.65</span>
<span class="c r p4" style="left:273.50px;top:513.00px;width:64.50px;height:12.50px;line-height:15.30px;">$1,273.57</span>
<span class="c r acc" style="left:338.00px;top:513.00px;width:84.50px;height:12.50px;line-height:15.30px;"><b class="ds">$</b>981,441.47</span>
<span class="c r p4" style="left:422.50px;top:513.00px;width:64.50px;height:12.50px;line-height:15.30px;">$61,964.71</span>
<span class="c r p4" style="left:487.00px;top:513.00px;width:65.50px;height:12.50px;line-height:15.30px;">$80,523.24</span>
<span class="c r p2" style="left:552.50px;top:513.00px;width:61.00px;height:12.50px;line-height:15.30px;">5.00%</span>
<span class="c r p2" style="left:613.50px;top:513.00px;width:43.50px;height:12.50px;line-height:15.30px;">1-Mar-21</span>
<span class="c ctr" style="left:17.50px;top:525.50px;width:123.00px;height:12.50px;line-height:15.30px;">16</span>
<span class="c r p4" style="left:140.50px;top:525.50px;width:75.50px;height:12.50px;line-height:15.30px;">$5,368.22</span>
<span class="c r p4" style="left:216.00px;top:525.50px;width:57.50px;height:12.50px;line-height:15.30px;">$4,089.34</span>
<span class="c r p4" style="left:273.50px;top:525.50px;width:64.50px;height:12.50px;line-height:15.30px;">$1,278.88</span>
<span class="c r acc" style="left:338.00px;top:525.50px;width:84.50px;height:12.50px;line-height:15.30px;"><b class="ds">$</b>980,162.59</span>
<span class="c r p4" style="left:422.50px;top:525.50px;width:64.50px;height:12.50px;line-height:15.30px;">$66,054.05</span>
<span class="c r p4" style="left:487.00px;top:525.50px;width:65.50px;height:12.50px;line-height:15.30px;">$85,891.46</span>
<span class="c r p2" style="left:552.50px;top:525.50px;width:61.00px;height:12.50px;line-height:15.30px;">5.00%</span>
<span class="c r p2" style="left:613.50px;top:525.50px;width:43.50px;height:12.50px;line-height:15.30px;">1-Apr-21</span>
<span class="c ctr" style="left:17.50px;top:538.00px;width:123.00px;height:12.50px;line-height:15.30px;">17</span>
<span class="c r p4" style="left:140.50px;top:538.00px;width:75.50px;height:12.50px;line-height:15.30px;">$5,368.22</span>
<span class="c r p4" style="left:216.00px;top:538.00px;width:57.50px;height:12.50px;line-height:15.30px;">$4,084.01</span>
<span class="c r p4" style="left:273.50px;top:538.00px;width:64.50px;height:12.50px;line-height:15.30px;">$1,284.21</span>
<span class="c r acc" style="left:338.00px;top:538.00px;width:84.50px;height:12.50px;line-height:15.30px;"><b class="ds">$</b>978,878.39</span>
<span class="c r p4" style="left:422.50px;top:538.00px;width:64.50px;height:12.50px;line-height:15.30px;">$70,138.06</span>
<span class="c r p4" style="left:487.00px;top:538.00px;width:65.50px;height:12.50px;line-height:15.30px;">$91,259.68</span>
<span class="c r p2" style="left:552.50px;top:538.00px;width:61.00px;height:12.50px;line-height:15.30px;">5.00%</span>
<span class="c r p2" style="left:613.50px;top:538.00px;width:43.50px;height:12.50px;line-height:15.30px;">1-May-21</span>
<span class="c ctr" style="left:17.50px;top:550.50px;width:123.00px;height:12.50px;line-height:15.30px;">18</span>
<span class="c r p4" style="left:140.50px;top:550.50px;width:75.50px;height:12.50px;line-height:15.30px;">$5,368.22</span>
<span class="c r p4" style="left:216.00px;top:550.50px;width:57.50px;height:12.50px;line-height:15.30px;">$4,078.66</span>
<span class="c r p4" style="left:273.50px;top:550.50px;width:64.50px;height:12.50px;line-height:15.30px;">$1,289.56</span>
<span class="c r acc" style="left:338.00px;top:550.50px;width:84.50px;height:12.50px;line-height:15.30px;"><b class="ds">$</b>977,588.83</span>
<span class="c r p4" style="left:422.50px;top:550.50px;width:64.50px;height:12.50px;line-height:15.30px;">$74,216.72</span>
<span class="c r p4" style="left:487.00px;top:550.50px;width:65.50px;height:12.50px;line-height:15.30px;">$96,627.89</span>
<span class="c r p2" style="left:552.50px;top:550.50px;width:61.00px;height:12.50px;line-height:15.30px;">5.00%</span>
<span class="c r p2" style="left:613.50px;top:550.50px;width:43.50px;height:12.50px;line-height:15.30px;">1-Jun-21</span>
<span class="c ctr" style="left:17.50px;top:563.00px;width:123.00px;height:12.50px;line-height:15.30px;">19</span>
<span class="c r p4" style="left:140.50px;top:563.00px;width:75.50px;height:12.50px;line-height:15.30px;">$5,368.22</span>
<span class="c r p4" style="left:216.00px;top:563.00px;width:57.50px;height:12.50px;line-height:15.30px;">$4,073.29</span>
<span class="c r p4" style="left:273.50px;top:563.00px;width:64.50px;height:12.50px;line-height:15.30px;">$1,294.93</span>
<span class="c r acc" style="left:338.00px;top:563.00px;width:84.50px;height:12.50px;line-height:15.30px;"><b class="ds">$</b>976,293.90</span>
<span class="c r p4" style="left:422.50px;top:563.00px;width:64.50px;height:12.50px;line-height:15.30px;">$78,290.01</span>
<span class="c r p4" style="left:487.00px;top:563.00px;width:65.50px;height:12.50px;line-height:15.30px;">$101,996.11</span>
<span class="c r p2" style="left:552.50px;top:563.00px;width:61.00px;height:12.50px;line-height:15.30px;">5.00%</span>
<span class="c r p2" style="left:613.50px;top:563.00px;width:43.50px;height:12.50px;line-height:15.30px;">1-Jul-21</span>
<span class="c ctr" style="left:17.50px;top:575.50px;width:123.00px;height:12.50px;line-height:15.30px;">20</span>
<span class="c r p4" style="left:140.50px;top:575.50px;width:75.50px;height:12.50px;line-height:15.30px;">$5,368.22</span>
<span class="c r p4" style="left:216.00px;top:575.50px;width:57.50px;height:12.50px;line-height:15.30px;">$4,067.89</span>
<span class="c r p4" style="left:273.50px;top:575.50px;width:64.50px;height:12.50px;line-height:15.30px;">$1,300.32</span>
<span class="c r acc" style="left:338.00px;top:575.50px;width:84.50px;height:12.50px;line-height:15.30px;"><b class="ds">$</b>974,993.57</span>
<span class="c r p4" style="left:422.50px;top:575.50px;width:64.50px;height:12.50px;line-height:15.30px;">$82,357.90</span>
<span class="c r p4" style="left:487.00px;top:575.50px;width:65.50px;height:12.50px;line-height:15.30px;">$107,364.32</span>
<span class="c r p2" style="left:552.50px;top:575.50px;width:61.00px;height:12.50px;line-height:15.30px;">5.00%</span>
<span class="c r p2" style="left:613.50px;top:575.50px;width:43.50px;height:12.50px;line-height:15.30px;">1-Aug-21</span>
<span class="c ctr" style="left:17.50px;top:588.00px;width:123.00px;height:12.50px;line-height:15.30px;">21</span>
<span class="c r p4" style="left:140.50px;top:588.00px;width:75.50px;height:12.50px;line-height:15.30px;">$5,368.22</span>
<span class="c r p4" style="left:216.00px;top:588.00px;width:57.50px;height:12.50px;line-height:15.30px;">$4,062.47</span>
<span class="c r p4" style="left:273.50px;top:588.00px;width:64.50px;height:12.50px;line-height:15.30px;">$1,305.74</span>
<span class="c r acc" style="left:338.00px;top:588.00px;width:84.50px;height:12.50px;line-height:15.30px;"><b class="ds">$</b>973,687.83</span>
<span class="c r p4" style="left:422.50px;top:588.00px;width:64.50px;height:12.50px;line-height:15.30px;">$86,420.37</span>
<span class="c r p4" style="left:487.00px;top:588.00px;width:65.50px;height:12.50px;line-height:15.30px;">$112,732.54</span>
<span class="c r p2" style="left:552.50px;top:588.00px;width:61.00px;height:12.50px;line-height:15.30px;">5.00%</span>
<span class="c r p2" style="left:613.50px;top:588.00px;width:43.50px;height:12.50px;line-height:15.30px;">1-Sep-21</span>
<span class="c ctr" style="left:17.50px;top:600.50px;width:123.00px;height:12.50px;line-height:15.30px;">22</span>
<span class="c r p4" style="left:140.50px;top:600.50px;width:75.50px;height:12.50px;line-height:15.30px;">$5,368.22</span>
<span class="c r p4" style="left:216.00px;top:600.50px;width:57.50px;height:12.50px;line-height:15.30px;">$4,057.03</span>
<span class="c r p4" style="left:273.50px;top:600.50px;width:64.50px;height:12.50px;line-height:15.30px;">$1,311.18</span>
<span class="c r acc" style="left:338.00px;top:600.50px;width:84.50px;height:12.50px;line-height:15.30px;"><b class="ds">$</b>972,376.65</span>
<span class="c r p4" style="left:422.50px;top:600.50px;width:64.50px;height:12.50px;line-height:15.30px;">$90,477.40</span>
<span class="c r p4" style="left:487.00px;top:600.50px;width:65.50px;height:12.50px;line-height:15.30px;">$118,100.76</span>
<span class="c r p2" style="left:552.50px;top:600.50px;width:61.00px;height:12.50px;line-height:15.30px;">5.00%</span>
<span class="c r p2" style="left:613.50px;top:600.50px;width:43.50px;height:12.50px;line-height:15.30px;">1-Oct-21</span>
<span class="c ctr" style="left:17.50px;top:613.00px;width:123.00px;height:12.50px;line-height:15.30px;">23</span>
<span class="c r p4" style="left:140.50px;top:613.00px;width:75.50px;height:12.50px;line-height:15.30px;">$5,368.22</span>
<span class="c r p4" style="left:216.00px;top:613.00px;width:57.50px;height:12.50px;line-height:15.30px;">$4,051.57</span>
<span class="c r p4" style="left:273.50px;top:613.00px;width:64.50px;height:12.50px;line-height:15.30px;">$1,316.65</span>
<span class="c r acc" style="left:338.00px;top:613.00px;width:84.50px;height:12.50px;line-height:15.30px;"><b class="ds">$</b>971,060.00</span>
<span class="c r p4" style="left:422.50px;top:613.00px;width:64.50px;height:12.50px;line-height:15.30px;">$94,528.97</span>
<span class="c r p4" style="left:487.00px;top:613.00px;width:65.50px;height:12.50px;line-height:15.30px;">$123,468.97</span>
<span class="c r p2" style="left:552.50px;top:613.00px;width:61.00px;height:12.50px;line-height:15.30px;">5.00%</span>
<span class="c r p2" style="left:613.50px;top:613.00px;width:43.50px;height:12.50px;line-height:15.30px;">1-Nov-21</span>
<span class="c ctr" style="left:17.50px;top:625.50px;width:123.00px;height:12.50px;line-height:15.30px;">24</span>
<span class="c r p4" style="left:140.50px;top:625.50px;width:75.50px;height:12.50px;line-height:15.30px;">$5,368.22</span>
<span class="c r p4" style="left:216.00px;top:625.50px;width:57.50px;height:12.50px;line-height:15.30px;">$4,046.08</span>
<span class="c r p4" style="left:273.50px;top:625.50px;width:64.50px;height:12.50px;line-height:15.30px;">$1,322.13</span>
<span class="c r acc" style="left:338.00px;top:625.50px;width:84.50px;height:12.50px;line-height:15.30px;"><b class="ds">$</b>969,737.87</span>
<span class="c r p4" style="left:422.50px;top:625.50px;width:64.50px;height:12.50px;line-height:15.30px;">$98,575.06</span>
<span class="c r p4" style="left:487.00px;top:625.50px;width:65.50px;height:12.50px;line-height:15.30px;">$128,837.19</span>
<span class="c r p2" style="left:552.50px;top:625.50px;width:61.00px;height:12.50px;line-height:15.30px;">5.00%</span>
<span class="c r p2" style="left:613.50px;top:625.50px;width:43.50px;height:12.50px;line-height:15.30px;">1-Dec-21</span>
<span class="c ctr" style="left:17.50px;top:638.00px;width:123.00px;height:12.50px;line-height:15.30px;">25</span>
<span class="c r p4" style="left:140.50px;top:638.00px;width:75.50px;height:12.50px;line-height:15.30px;">$5,368.22</span>
<span class="c r p4" style="left:216.00px;top:638.00px;width:57.50px;height:12.50px;line-height:15.30px;">$4,040.57</span>
<span class="c r p4" style="left:273.50px;top:638.00px;width:64.50px;height:12.50px;line-height:15.30px;">$1,327.64</span>
<span class="c r acc" style="left:338.00px;top:638.00px;width:84.50px;height:12.50px;line-height:15.30px;"><b class="ds">$</b>968,410.23</span>
<span class="c r p4" style="left:422.50px;top:638.00px;width:64.50px;height:12.50px;line-height:15.30px;">$102,615.63</span>
<span class="c r p4" style="left:487.00px;top:638.00px;width:65.50px;height:12.50px;line-height:15.30px;">$134,205.41</span>
<span class="c r p2" style="left:552.50px;top:638.00px;width:61.00px;height:12.50px;line-height:15.30px;">5.00%</span>
<span class="c r p2" style="left:613.50px;top:638.00px;width:43.50px;height:12.50px;line-height:15.30px;">1-Jan-22</span>
<span class="c ctr" style="left:17.50px;top:650.50px;width:123.00px;height:12.50px;line-height:15.30px;">26</span>
<span class="c r p4" style="left:140.50px;top:650.50px;width:75.50px;height:12.50px;line-height:15.30px;">$5,368.22</span>
<span class="c r p4" style="left:216.00px;top:650.50px;width:57.50px;height:12.50px;line-height:15.30px;">$4,035.04</span>
<span class="c r p4" style="left:273.50px;top:650.50px;width:64.50px;height:12.50px;line-height:15.30px;">$1,333.17</span>
<span class="c r acc" style="left:338.00px;top:650.50px;width:84.50px;height:12.50px;line-height:15.30px;"><b class="ds">$</b>967,077.05</span>
<span class="c r p4" style="left:422.50px;top:650.50px;width:64.50px;height:12.50px;line-height:15.30px;">$106,650.67</span>
<span class="c r p4" style="left:487.00px;top:650.50px;width:65.50px;height:12.50px;line-height:15.30px;">$139,573.62</span>
<span class="c r p2" style="left:552.50px;top:650.50px;width:61.00px;height:12.50px;line-height:15.30px;">5.00%</span>
<span class="c r p2" style="left:613.50px;top:650.50px;width:43.50px;height:12.50px;line-height:15.30px;">1-Feb-22</span>
<span class="c ctr" style="left:17.50px;top:663.00px;width:123.00px;height:12.50px;line-height:15.30px;">27</span>
<span class="c r p4" style="left:140.50px;top:663.00px;width:75.50px;height:12.50px;line-height:15.30px;">$5,368.22</span>
<span class="c r p4" style="left:216.00px;top:663.00px;width:57.50px;height:12.50px;line-height:15.30px;">$4,029.49</span>
<span class="c r p4" style="left:273.50px;top:663.00px;width:64.50px;height:12.50px;line-height:15.30px;">$1,338.73</span>
<span class="c r acc" style="left:338.00px;top:663.00px;width:84.50px;height:12.50px;line-height:15.30px;"><b class="ds">$</b>965,738.32</span>
<span class="c r p4" style="left:422.50px;top:663.00px;width:64.50px;height:12.50px;line-height:15.30px;">$110,680.16</span>
<span class="c r p4" style="left:487.00px;top:663.00px;width:65.50px;height:12.50px;line-height:15.30px;">$144,941.84</span>
<span class="c r p2" style="left:552.50px;top:663.00px;width:61.00px;height:12.50px;line-height:15.30px;">5.00%</span>
<span class="c r p2" style="left:613.50px;top:663.00px;width:43.50px;height:12.50px;line-height:15.30px;">1-Mar-22</span>
<span class="c ctr" style="left:17.50px;top:675.50px;width:123.00px;height:12.50px;line-height:15.30px;">28</span>
<span class="c r p4" style="left:140.50px;top:675.50px;width:75.50px;height:12.50px;line-height:15.30px;">$5,368.22</span>
<span class="c r p4" style="left:216.00px;top:675.50px;width:57.50px;height:12.50px;line-height:15.30px;">$4,023.91</span>
<span class="c r p4" style="left:273.50px;top:675.50px;width:64.50px;height:12.50px;line-height:15.30px;">$1,344.31</span>
<span class="c r acc" style="left:338.00px;top:675.50px;width:84.50px;height:12.50px;line-height:15.30px;"><b class="ds">$</b>964,394.02</span>
<span class="c r p4" style="left:422.50px;top:675.50px;width:64.50px;height:12.50px;line-height:15.30px;">$114,704.07</span>
<span class="c r p4" style="left:487.00px;top:675.50px;width:65.50px;height:12.50px;line-height:15.30px;">$150,310.05</span>
<span class="c r p2" style="left:552.50px;top:675.50px;width:61.00px;height:12.50px;line-height:15.30px;">5.00%</span>
<span class="c r p2" style="left:613.50px;top:675.50px;width:43.50px;height:12.50px;line-height:15.30px;">1-Apr-22</span>
<span class="c ctr" style="left:17.50px;top:688.00px;width:123.00px;height:12.50px;line-height:15.30px;">29</span>
<span class="c r p4" style="left:140.50px;top:688.00px;width:75.50px;height:12.50px;line-height:15.30px;">$5,368.22</span>
<span class="c r p4" style="left:216.00px;top:688.00px;width:57.50px;height:12.50px;line-height:15.30px;">$4,018.31</span>
<span class="c r p4" style="left:273.50px;top:688.00px;width:64.50px;height:12.50px;line-height:15.30px;">$1,349.91</span>
<span class="c r acc" style="left:338.00px;top:688.00px;width:84.50px;height:12.50px;line-height:15.30px;"><b class="ds">$</b>963,044.11</span>
<span class="c r p4" style="left:422.50px;top:688.00px;width:64.50px;height:12.50px;line-height:15.30px;">$118,722.38</span>
<span class="c r p4" style="left:487.00px;top:688.00px;width:65.50px;height:12.50px;line-height:15.30px;">$155,678.27</span>
<span class="c r p2" style="left:552.50px;top:688.00px;width:61.00px;height:12.50px;line-height:15.30px;">5.00%</span>
<span class="c r p2" style="left:613.50px;top:688.00px;width:43.50px;height:12.50px;line-height:15.30px;">1-May-22</span>
<span class="c ctr" style="left:17.50px;top:700.50px;width:123.00px;height:12.50px;line-height:15.30px;">30</span>
<span class="c r p4" style="left:140.50px;top:700.50px;width:75.50px;height:12.50px;line-height:15.30px;">$5,368.22</span>
<span class="c r p4" style="left:216.00px;top:700.50px;width:57.50px;height:12.50px;line-height:15.30px;">$4,012.68</span>
<span class="c r p4" style="left:273.50px;top:700.50px;width:64.50px;height:12.50px;line-height:15.30px;">$1,355.53</span>
<span class="c r acc" style="left:338.00px;top:700.50px;width:84.50px;height:12.50px;line-height:15.30px;"><b class="ds">$</b>961,688.58</span>
<span class="c r p4" style="left:422.50px;top:700.50px;width:64.50px;height:12.50px;line-height:15.30px;">$122,735.06</span>
<span class="c r p4" style="left:487.00px;top:700.50px;width:65.50px;height:12.50px;line-height:15.30px;">$161,046.49</span>
<span class="c r p2" style="left:552.50px;top:700.50px;width:61.00px;height:12.50px;line-height:15.30px;">5.00%</span>
<span class="c r p2" style="left:613.50px;top:700.50px;width:43.50px;height:12.50px;line-height:15.30px;">1-Jun-22</span>
<span class="c ctr" style="left:17.50px;top:713.00px;width:123.00px;height:12.50px;line-height:15.30px;">31</span>
<span class="c r p4" style="left:140.50px;top:713.00px;width:75.50px;height:12.50px;line-height:15.30px;">$5,368.22</span>
<span class="c r p4" style="left:216.00px;top:713.00px;width:57.50px;height:12.50px;line-height:15.30px;">$4,007.04</span>
<span class="c r p4" style="left:273.50px;top:713.00px;width:64.50px;height:12.50px;line-height:15.30px;">$1,361.18</span>
<span class="c r acc" style="left:338.00px;top:713.00px;width:84.50px;height:12.50px;line-height:15.30px;"><b class="ds">$</b>960,327.40</span>
<span class="c r p4" style="left:422.50px;top:713.00px;width:64.50px;height:12.50px;line-height:15.30px;">$126,742.10</span>
<span class="c r p4" style="left:487.00px;top:713.00px;width:65.50px;height:12.50px;line-height:15.30px;">$166,414.70</span>
<span class="c r p2" style="left:552.50px;top:713.00px;width:61.00px;height:12.50px;line-height:15.30px;">5.00%</span>
<span class="c r p2" style="left:613.50px;top:713.00px;width:43.50px;height:12.50px;line-height:15.30px;">1-Jul-22</span>
<span class="c ctr" style="left:17.50px;top:725.50px;width:123.00px;height:12.50px;line-height:15.30px;">32</span>
<span class="c r p4" style="left:140.50px;top:725.50px;width:75.50px;height:12.50px;line-height:15.30px;">$5,368.22</span>
<span class="c r p4" style="left:216.00px;top:725.50px;width:57.50px;height:12.50px;line-height:15.30px;">$4,001.36</span>
<span class="c r p4" style="left:273.50px;top:725.50px;width:64.50px;height:12.50px;line-height:15.30px;">$1,366.85</span>
<span class="c r acc" style="left:338.00px;top:725.50px;width:84.50px;height:12.50px;line-height:15.30px;"><b class="ds">$</b>958,960.54</span>
<span class="c r p4" style="left:422.50px;top:725.50px;width:64.50px;height:12.50px;line-height:15.30px;">$130,743.46</span>
<span class="c r p4" style="left:487.00px;top:725.50px;width:65.50px;height:12.50px;line-height:15.30px;">$171,782.92</span>
<span class="c r p2" style="left:552.50px;top:725.50px;width:61.00px;height:12.50px;line-height:15.30px;">5.00%</span>
<span class="c r p2" style="left:613.50px;top:725.50px;width:43.50px;height:12.50px;line-height:15.30px;">1-Aug-22</span>
<span class="c ctr" style="left:17.50px;top:738.00px;width:123.00px;height:12.50px;line-height:15.30px;">33</span>
<span class="c r p4" style="left:140.50px;top:738.00px;width:75.50px;height:12.50px;line-height:15.30px;">$5,368.22</span>
<span class="c r p4" style="left:216.00px;top:738.00px;width:57.50px;height:12.50px;line-height:15.30px;">$3,995.67</span>
<span class="c r p4" style="left:273.50px;top:738.00px;width:64.50px;height:12.50px;line-height:15.30px;">$1,372.55</span>
<span class="c r acc" style="left:338.00px;top:738.00px;width:84.50px;height:12.50px;line-height:15.30px;"><b class="ds">$</b>957,588.00</span>
<span class="c r p4" style="left:422.50px;top:738.00px;width:64.50px;height:12.50px;line-height:15.30px;">$134,739.13</span>
<span class="c r p4" style="left:487.00px;top:738.00px;width:65.50px;height:12.50px;line-height:15.30px;">$177,151.14</span>
<span class="c r p2" style="left:552.50px;top:738.00px;width:61.00px;height:12.50px;line-height:15.30px;">5.00%</span>
<span class="c r p2" style="left:613.50px;top:738.00px;width:43.50px;height:12.50px;line-height:15.30px;">1-Sep-22</span>
<span class="c ctr" style="left:17.50px;top:750.50px;width:123.00px;height:12.50px;line-height:15.30px;">34</span>
<span class="c r p4" style="left:140.50px;top:750.50px;width:75.50px;height:12.50px;line-height:15.30px;">$5,368.22</span>
<span class="c r p4" style="left:216.00px;top:750.50px;width:57.50px;height:12.50px;line-height:15.30px;">$3,989.95</span>
<span class="c r p4" style="left:273.50px;top:750.50px;width:64.50px;height:12.50px;line-height:15.30px;">$1,378.27</span>
<span class="c r acc" style="left:338.00px;top:750.50px;width:84.50px;height:12.50px;line-height:15.30px;"><b class="ds">$</b>956,209.73</span>
<span class="c r p4" style="left:422.50px;top:750.50px;width:64.50px;height:12.50px;line-height:15.30px;">$138,729.08</span>
<span class="c r p4" style="left:487.00px;top:750.50px;width:65.50px;height:12.50px;line-height:15.30px;">$182,519.35</span>
<span class="c r p2" style="left:552.50px;top:750.50px;width:61.00px;height:12.50px;line-height:15.30px;">5.00%</span>
<span class="c r p2" style="left:613.50px;top:750.50px;width:43.50px;height:12.50px;line-height:15.30px;">1-Oct-22</span>
<span class="c ctr" style="left:17.50px;top:763.00px;width:123.00px;height:12.50px;line-height:15.30px;">35</span>
<span class="c r p4" style="left:140.50px;top:763.00px;width:75.50px;height:12.50px;line-height:15.30px;">$5,368.22</span>
<span class="c r p4" style="left:216.00px;top:763.00px;width:57.50px;height:12.50px;line-height:15.30px;">$3,984.21</span>
<span class="c r p4" style="left:273.50px;top:763.00px;width:64.50px;height:12.50px;line-height:15.30px;">$1,384.01</span>
<span class="c r acc" style="left:338.00px;top:763.00px;width:84.50px;height:12.50px;line-height:15.30px;"><b class="ds">$</b>954,825.72</span>
<span class="c r p4" style="left:422.50px;top:763.00px;width:64.50px;height:12.50px;line-height:15.30px;">$142,713.29</span>
<span class="c r p4" style="left:487.00px;top:763.00px;width:65.50px;height:12.50px;line-height:15.30px;">$187,887.57</span>
<span class="c r p2" style="left:552.50px;top:763.00px;width:61.00px;height:12.50px;line-height:15.30px;">5.00%</span>
<span class="c r p2" style="left:613.50px;top:763.00px;width:43.50px;height:12.50px;line-height:15.30px;">1-Nov-22</span>
<span class="c ctr" style="left:17.50px;top:775.50px;width:123.00px;height:12.50px;line-height:15.30px;">36</span>
<span class="c r p4" style="left:140.50px;top:775.50px;width:75.50px;height:12.50px;line-height:15.30px;">$5,368.22</span>
<span class="c r p4" style="left:216.00px;top:775.50px;width:57.50px;height:12.50px;line-height:15.30px;">$3,978.44</span>
<span class="c r p4" style="left:273.50px;top:775.50px;width:64.50px;height:12.50px;line-height:15.30px;">$1,389.78</span>
<span class="c r acc" style="left:338.00px;top:775.50px;width:84.50px;height:12.50px;line-height:15.30px;"><b class="ds">$</b>953,435.95</span>
<span class="c r p4" style="left:422.50px;top:775.50px;width:64.50px;height:12.50px;line-height:15.30px;">$146,691.73</span>
<span class="c r p4" style="left:487.00px;top:775.50px;width:65.50px;height:12.50px;line-height:15.30px;">$193,255.78</span>
<span class="c r p2" style="left:552.50px;top:775.50px;width:61.00px;height:12.50px;line-height:15.30px;">5.00%</span>
<span class="c r p2" style="left:613.50px;top:775.50px;width:43.50px;height:12.50px;line-height:15.30px;">1-Dec-22</span>
<span class="c ctr" style="left:17.50px;top:788.00px;width:123.00px;height:12.50px;line-height:15.30px;">37</span>
<span class="c r p4" style="left:140.50px;top:788.00px;width:75.50px;height:12.50px;line-height:15.30px;">$5,368.22</span>
<span class="c r p4" style="left:216.00px;top:788.00px;width:57.50px;height:12.50px;line-height:15.30px;">$3,972.65</span>
<span class="c r p4" style="left:273.50px;top:788.00px;width:64.50px;height:12.50px;line-height:15.30px;">$1,395.57</span>
<span class="c r acc" style="left:338.00px;top:788.00px;width:84.50px;height:12.50px;line-height:15.30px;"><b class="ds">$</b>952,040.38</span>
<span class="c r p4" style="left:422.50px;top:788.00px;width:64.50px;height:12.50px;line-height:15.30px;">$150,664.38</span>
<span class="c r p4" style="left:487.00px;top:788.00px;width:65.50px;height:12.50px;line-height:15.30px;">$198,624.00</span>
<span class="c r p2" style="left:552.50px;top:788.00px;width:61.00px;height:12.50px;line-height:15.30px;">5.00%</span>
<span class="c r p2" style="left:613.50px;top:788.00px;width:43.50px;height:12.50px;line-height:15.30px;">1-Jan-23</span>
<span class="c ctr" style="left:17.50px;top:800.50px;width:123.00px;height:12.50px;line-height:15.30px;">38</span>
<span class="c r p4" style="left:140.50px;top:800.50px;width:75.50px;height:12.50px;line-height:15.30px;">$5,368.22</span>
<span class="c r p4" style="left:216.00px;top:800.50px;width:57.50px;height:12.50px;line-height:15.30px;">$3,966.83</span>
<span class="c r p4" style="left:273.50px;top:800.50px;width:64.50px;height:12.50px;line-height:15.30px;">$1,401.38</span>
<span class="c r acc" style="left:338.00px;top:800.50px;width:84.50px;height:12.50px;line-height:15.30px;"><b class="ds">$</b>950,639.00</span>
<span class="c r p4" style="left:422.50px;top:800.50px;width:64.50px;height:12.50px;line-height:15.30px;">$154,631.22</span>
<span class="c r p4" style="left:487.00px;top:800.50px;width:65.50px;height:12.50px;line-height:15.30px;">$203,992.22</span>
<span class="c r p2" style="left:552.50px;top:800.50px;width:61.00px;height:12.50px;line-height:15.30px;">5.00%</span>
<span class="c r p2" style="left:613.50px;top:800.50px;width:43.50px;height:12.50px;line-height:15.30px;">1-Feb-23</span>
<span class="c ctr" style="left:17.50px;top:813.00px;width:123.00px;height:12.50px;line-height:15.30px;">39</span>
<span class="c r p4" style="left:140.50px;top:813.00px;width:75.50px;height:12.50px;line-height:15.30px;">$5,368.22</span>
<span class="c r p4" style="left:216.00px;top:813.00px;width:57.50px;height:12.50px;line-height:15.30px;">$3,961.00</span>
<span class="c r p4" style="left:273.50px;top:813.00px;width:64.50px;height:12.50px;line-height:15.30px;">$1,407.22</span>
<span class="c r acc" style="left:338.00px;top:813.00px;width:84.50px;height:12.50px;line-height:15.30px;"><b class="ds">$</b>949,231.78</span>
<span class="c r p4" style="left:422.50px;top:813.00px;width:64.50px;height:12.50px;line-height:15.30px;">$158,592.21</span>
<span class="c r p4" style="left:487.00px;top:813.00px;width:65.50px;height:12.50px;line-height:15.30px;">$209,360.43</span>
<span class="c r p2" style="left:552.50px;top:813.00px;width:61.00px;height:12.50px;line-height:15.30px;">5.00%</span>
<span class="c r p2" style="left:613.50px;top:813.00px;width:43.50px;height:12.50px;line-height:15.30px;">1-Mar-23</span>
<!--borders-->
<i class="ln" style="left:17.50px;top:211.35px;width:405.90px;height:1.30px;background:#1a1a1a"></i>
<i class="ln" style="left:17.50px;top:274.15px;width:199.50px;height:1.30px;background:#1a1a1a"></i>
<i class="ln" style="left:215.60px;top:211.40px;width:1.40px;height:64.00px;background:#1a1a1a"></i>
<i class="ln" style="left:140.20px;top:212.00px;width:1.00px;height:62.80px;background:#333"></i>
<i class="ln" style="left:140.70px;top:223.80px;width:75.30px;height:1.00px;background:#333"></i>
<i class="ln" style="left:140.70px;top:236.40px;width:75.30px;height:1.00px;background:#333"></i>
<i class="ln" style="left:140.70px;top:249.00px;width:75.30px;height:1.00px;background:#333"></i>
<i class="ln" style="left:140.70px;top:261.60px;width:75.30px;height:1.00px;background:#333"></i>
<i class="ln" style="left:422.00px;top:211.40px;width:1.40px;height:38.80px;background:#1a1a1a"></i>
<i class="ln" style="left:216.30px;top:248.80px;width:207.10px;height:1.40px;background:#111"></i>
<i class="ln" style="left:216.30px;top:223.80px;width:206.40px;height:1.00px;background:#333"></i>
<i class="ln" style="left:216.30px;top:236.40px;width:206.40px;height:1.00px;background:#333"></i>
<i class="ln" style="left:338.00px;top:212.00px;width:1.00px;height:37.50px;background:#333"></i>
<i class="ln" style="left:17.50px;top:299.90px;width:640.30px;height:1.00px;background:#444"></i>
<i class="ln" style="left:140.20px;top:300.00px;width:1.00px;height:25.50px;background:#555"></i>
<i class="ln" style="left:215.70px;top:300.00px;width:1.00px;height:25.50px;background:#555"></i>
<i class="ln" style="left:273.20px;top:300.00px;width:1.00px;height:25.50px;background:#555"></i>
<i class="ln" style="left:337.70px;top:300.00px;width:1.00px;height:25.50px;background:#555"></i>
<i class="ln" style="left:422.20px;top:300.00px;width:1.00px;height:25.50px;background:#555"></i>
<i class="ln" style="left:486.70px;top:300.00px;width:1.00px;height:25.50px;background:#555"></i>
<i class="ln" style="left:552.20px;top:300.00px;width:1.00px;height:25.50px;background:#555"></i>
<i class="ln" style="left:613.20px;top:300.00px;width:1.00px;height:25.50px;background:#555"></i>
<i class="ln" style="left:656.70px;top:300.00px;width:1.00px;height:25.50px;background:#555"></i>
<i class="ln" style="left:0.00px;top:324.90px;width:1584.00px;height:1.00px;background:#bdbdbd"></i>
</div>
<i class="abs" style="left:6.50px;top:146.50px;width:78.50px;height:17.90px;background:#fff;border-radius:3px;box-shadow:0 0 0 0.6px #e6e6e6"></i>
<span class="t" style="left:10.50px;top:149.00px;font-size:10px;letter-spacing:-0.053px;color:#333;">U18</span>
<svg class="abs" style="left:73.00px;top:153.80px" width="8.0" height="5.0" viewBox="0 0 8.0 5.0"><path d="M1 1 L4.00 4.00 L7.00 1" fill="none" stroke="#444" stroke-width="0.9" stroke-linecap="round" stroke-linejoin="round"/></svg>
<i class="abs" style="left:92.40px;top:152.30px;width:1.70px;height:1.70px;background:#3a3a3a;border-radius:40%"></i>
<i class="abs" style="left:92.40px;top:155.40px;width:1.70px;height:1.70px;background:#3a3a3a;border-radius:40%"></i>
<i class="abs" style="left:92.40px;top:158.50px;width:1.70px;height:1.70px;background:#3a3a3a;border-radius:40%"></i>
<i class="abs" style="left:101.50px;top:146.50px;width:66.00px;height:17.90px;background:#fff;border-radius:3px;box-shadow:0 0 0 0.6px #e6e6e6"></i>
<svg class="abs" style="left:106.50px;top:151.00px" width="9" height="9" viewBox="0 0 9 9"><path d="M0.7 0.7 L8.3 8.3 M8.3 0.7 L0.7 8.3" stroke="#b4b4b4" stroke-width="1"/></svg>
<svg class="abs" style="left:124.00px;top:151.00px" width="12" height="9" viewBox="0 0 12 9"><path d="M0.8 5 L4 8 L11 0.8" fill="none" stroke="#b4b4b4" stroke-width="1"/></svg>
<span class="t" style="left:143.5px;top:148.2px;font-size:13.4px;font-style:italic;font-weight:bold;font-family:'Liberation Serif',serif;color:#333;letter-spacing:-0.5px">fx</span>
<svg class="abs" style="left:158.55px;top:153.82px" width="7.5" height="4.8" viewBox="0 0 7.5 4.8"><path d="M1 1 L3.75 3.75 L6.50 1" fill="none" stroke="#999" stroke-width="0.9" stroke-linecap="round" stroke-linejoin="round"/></svg>
<i class="abs" style="left:171.50px;top:146.50px;width:1421.50px;height:17.90px;background:#fff;border-radius:3px;box-shadow:0 0 0 0.6px #e6e6e6"></i>
<svg class="abs" style="left:1582.00px;top:152.45px" width="9.0" height="5.5" viewBox="0 0 9.0 5.5"><path d="M1 1 L4.50 4.50 L8.00 1" fill="none" stroke="#444" stroke-width="0.9" stroke-linecap="round" stroke-linejoin="round"/></svg>
<svg class="abs" style="left:8.00px;top:172.50px" width="9" height="8.5" viewBox="0 0 9 8.5"><path d="M8.5 0.5 V8 H0.5 Z" fill="#d2d2d2"/></svg>
<i class="abs" style="left:1584.00px;top:170.00px;width:16.00px;height:651.00px;background:#f0f0f0"></i>
<svg class="abs" style="left:1588.40px;top:173.60px" width="7" height="5" viewBox="0 0 7 5"><path d="M0.3 4.6 L3.5 0.4 L6.7 4.6 Z" fill="#6b6b6b"/></svg>
<i class="abs" style="left:1588.80px;top:183.00px;width:6.80px;height:16.40px;background:#707070;border-radius:3.4px"></i>
<svg class="abs" style="left:1588.70px;top:812.60px" width="7" height="5" viewBox="0 0 7 5"><path d="M0.3 0.4 L3.5 4.6 L6.7 0.4 Z" fill="#6b6b6b"/></svg>
<i class="abs" style="left:0.00px;top:820.50px;width:1600.00px;height:24.50px;background:#f0f0f0"></i>
<svg class="abs" style="left:19.50px;top:829.00px" width="5" height="8" viewBox="0 0 5 8"><path d="M4.2 0.6 L0.8 4 L4.2 7.4" fill="none" stroke="#b0b0b0" stroke-width="1"/></svg>
<svg class="abs" style="left:45.00px;top:829.00px" width="5" height="8" viewBox="0 0 5 8"><path d="M0.8 0.6 L4.2 4 L0.8 7.4" fill="none" stroke="#b0b0b0" stroke-width="1"/></svg>
<i class="abs" style="left:88.00px;top:824.20px;width:40.00px;height:18.10px;background:#fff;border-radius:4px"></i>
<span class="t" style="left:95.00px;top:827.00px;font-size:11.4px;transform:scaleX(0.9507);transform-origin:0 50%;color:#222;">Index</span>
<i class="abs" style="left:135.00px;top:824.20px;width:49.50px;height:18.10px;background:#fcfcc6;border-radius:4px"></i>
<span class="t" style="left:141.50px;top:827.00px;font-size:11.4px;letter-spacing:-0.105px;color:#222;">Control</span>
<i class="abs" style="left:191.00px;top:824.20px;width:60.00px;height:18.10px;background:#fcfcc6;border-radius:4px"></i>
<span class="t" style="left:198.00px;top:827.00px;font-size:11.4px;transform:scaleX(0.8967);transform-origin:0 50%;color:#222;">Revenues</span>
<i class="abs" style="left:258.00px;top:824.20px;width:113.00px;height:18.10px;background:#fcfcc6;border-radius:4px"></i>
<span class="t" style="left:266.00px;top:827.00px;font-size:11.4px;transform:scaleX(0.9516);transform-origin:0 50%;color:#222;">Exhibit Assumptions</span>
<i class="abs" style="left:378.00px;top:824.20px;width:36.00px;height:18.10px;background:#fcfcc6;border-radius:4px"></i>
<span class="t" style="left:385.00px;top:827.00px;font-size:11.4px;transform:scaleX(0.9469);transform-origin:0 50%;color:#222;">Staff</span>
<i class="abs" style="left:421.00px;top:824.20px;width:68.00px;height:18.10px;background:#fcfcc6;border-radius:4px"></i>
<span class="t" style="left:428.00px;top:827.00px;font-size:11.4px;transform:scaleX(0.9062);transform-origin:0 50%;color:#222;">Fixed Costs</span>
<i class="abs" style="left:496.00px;top:824.20px;width:71.00px;height:18.10px;background:#fcfcc6;border-radius:4px"></i>
<span class="t" style="left:503.00px;top:827.00px;font-size:11.4px;transform:scaleX(0.9378);transform-origin:0 50%;color:#222;">Other Costs</span>
<i class="abs" style="left:617.50px;top:824.20px;width:86.10px;height:18.10px;background:#00b0f0;border-radius:4px"></i>
<span class="t" style="left:625.00px;top:827.00px;font-size:11.4px;letter-spacing:-0.084px;color:#222;">Monthly Detail</span>
<i class="abs" style="left:710.50px;top:824.20px;width:79.50px;height:18.10px;background:#00b0f0;border-radius:4px"></i>
<span class="t" style="left:717.50px;top:827.00px;font-size:11.4px;transform:scaleX(0.9592);transform-origin:0 50%;color:#222;">Annual Detail</span>
<i class="abs" style="left:797.00px;top:824.20px;width:109.00px;height:18.10px;background:#00b0f0;border-radius:4px"></i>
<span class="t" style="left:805.00px;top:827.00px;font-size:11.4px;transform:scaleX(0.9232);transform-origin:0 50%;color:#222;">Executive Summary</span>
<i class="abs" style="left:913.00px;top:824.20px;width:47.00px;height:18.10px;background:#00b0f0;border-radius:4px"></i>
<span class="t" style="left:920.00px;top:827.00px;font-size:11.4px;transform:scaleX(0.9037);transform-origin:0 50%;color:#222;">Visuals</span>
<span class="t" style="left:974.50px;top:827.00px;font-size:11.4px;transform:scaleX(0.9457);transform-origin:0 50%;color:#222;">Staff Detail</span>
<span class="t" style="left:1048.50px;top:827.00px;font-size:11.4px;letter-spacing:-0.064px;color:#222;">validation</span>
<i class="abs" style="left:131.00px;top:827.50px;width:1.00px;height:12.00px;background:#d4d4d4"></i>
<i class="abs" style="left:187.00px;top:827.50px;width:1.00px;height:12.00px;background:#d4d4d4"></i>
<i class="abs" style="left:254.00px;top:827.50px;width:1.00px;height:12.00px;background:#d4d4d4"></i>
<i class="abs" style="left:374.00px;top:827.50px;width:1.00px;height:12.00px;background:#d4d4d4"></i>
<i class="abs" style="left:417.00px;top:827.50px;width:1.00px;height:12.00px;background:#d4d4d4"></i>
<i class="abs" style="left:492.00px;top:827.50px;width:1.00px;height:12.00px;background:#d4d4d4"></i>
<i class="abs" style="left:613.00px;top:827.50px;width:1.00px;height:12.00px;background:#d4d4d4"></i>
<i class="abs" style="left:706.50px;top:827.50px;width:1.00px;height:12.00px;background:#d4d4d4"></i>
<i class="abs" style="left:793.00px;top:827.50px;width:1.00px;height:12.00px;background:#d4d4d4"></i>
<i class="abs" style="left:909.00px;top:827.50px;width:1.00px;height:12.00px;background:#d4d4d4"></i>
<i class="abs" style="left:963.00px;top:827.50px;width:1.00px;height:12.00px;background:#d4d4d4"></i>
<i class="abs" style="left:1037.00px;top:827.50px;width:1.00px;height:12.00px;background:#d4d4d4"></i>
<i class="abs" style="left:1105.00px;top:827.50px;width:1.00px;height:12.00px;background:#d4d4d4"></i>
<i class="abs" style="left:574.00px;top:820.50px;width:36.60px;height:21.80px;background:linear-gradient(#fff 0%,#fde4e4 35%,#f79a9a 100%);border-radius:0 0 4px 4px"></i>
<span class="t" style="left:580.50px;top:825.00px;font-size:10.4px;letter-spacing:0.102px;font-weight:bold;color:#1f1f1f;">Debt</span>
<i class="abs" style="left:580.30px;top:839.40px;width:23.90px;height:1.60px;background:#1e7145;border-radius:1px"></i>
<svg class="abs" style="left:1138.00px;top:828.00px" width="10" height="10" viewBox="0 0 10 10"><path d="M5 0.5 V9.5 M0.5 5 H9.5" stroke="#333" stroke-width="1.25"/></svg>
<i class="abs" style="left:1361.40px;top:829.60px;width:1.40px;height:1.40px;background:#444;border-radius:50%"></i>
<i class="abs" style="left:1361.40px;top:832.60px;width:1.40px;height:1.40px;background:#444;border-radius:50%"></i>
<i class="abs" style="left:1361.40px;top:835.60px;width:1.40px;height:1.40px;background:#444;border-radius:50%"></i>
<svg class="abs" style="left:1378.30px;top:829.70px" width="5" height="7" viewBox="0 0 5 7"><path d="M4.6 0.3 L0.4 3.5 L4.6 6.7 Z" fill="#6b6b6b"/></svg>
<i class="abs" style="left:1387.50px;top:829.60px;width:179.30px;height:6.60px;background:#737373;border-radius:3.3px"></i>
<svg class="abs" style="left:1574.60px;top:829.70px" width="5" height="7" viewBox="0 0 5 7"><path d="M0.4 0.3 L4.6 3.5 L0.4 6.7 Z" fill="#6b6b6b"/></svg>
<i class="abs" style="left:0.00px;top:845.00px;width:1600.00px;height:17.30px;background:#f3f3f3"></i>
<span class="t" style="left:9.00px;top:848.00px;font-size:8.6px;transform:scaleX(0.8855);transform-origin:0 50%;color:#444;">Ready</span>
<span class="t" style="left:43.50px;top:848.00px;font-size:8.6px;transform:scaleX(0.9071);transform-origin:0 50%;color:#444;">Calculate</span>
<svg class="abs" style="left:92.00px;top:849.50px" width="12" height="10" viewBox="0 0 12 10"><rect x="0.5" y="0.5" width="10" height="8.4" fill="none" stroke="#444" stroke-width="1"/><path d="M0.5 2.6 H10.5 M3 2.6 V9" stroke="#444" stroke-width="0.9"/><circle cx="8.3" cy="6.8" r="2.6" fill="#f3f3f3" stroke="#444" stroke-width="0.9"/><circle cx="8.3" cy="6.8" r="1.1" fill="#444"/></svg>
<svg class="abs" style="left:117.00px;top:848.50px" width="12" height="12" viewBox="0 0 12 12"><circle cx="5.5" cy="1.9" r="1.3" fill="none" stroke="#444" stroke-width="0.9"/><path d="M1 4.2 L4 4.8 V8 L2.4 11.2 M10 4.2 L7 4.8 V8 L7.8 9 M4 4.8 H7" fill="none" stroke="#444" stroke-width="0.9" stroke-linejoin="round"/><path d="M6.6 9 L8.6 11.4 M8.6 9 L6.6 11.4 M9.6 9 L11.4 11.4 M11.4 9 L9.6 11.4" stroke="#444" stroke-width="0.7"/></svg>
<span class="t" style="left:131.00px;top:848.00px;font-size:8.6px;transform:scaleX(0.9201);transform-origin:0 50%;font-weight:bold;color:#333;">Accessibility: Investigate</span>
<i class="abs" style="left:1367.50px;top:845.80px;width:31.30px;height:16.50px;background:#dedede"></i>
<svg class="abs" style="left:1377.50px;top:849.20px" width="10.5" height="10.5" viewBox="0 0 10.5 10.5"><path d="M0.5 0.5 H10 V10 H0.5 Z M3.7 0.5 V10 M6.8 0.5 V10 M0.5 3.7 H10 M0.5 6.8 H10" fill="none" stroke="#3b3b3b" stroke-width="1.1"/></svg>
<svg class="abs" style="left:1409.00px;top:849.20px" width="11" height="10.5" viewBox="0 0 11 10.5"><rect x="0.5" y="0.5" width="10" height="9.5" fill="none" stroke="#3b3b3b" stroke-width="1.1"/><rect x="2.8" y="2.4" width="5.4" height="5.8" fill="#bbb" stroke="#3b3b3b" stroke-width="0.8"/></svg>
<svg class="abs" style="left:1440.00px;top:849.20px" width="11" height="10.5" viewBox="0 0 11 10.5"><path d="M0.5 0.5 H10.5 V10 H0.5 Z M0.5 5.6 H10.5 M4 0.5 V5.6 M7 0.5 V5.6" fill="none" stroke="#3b3b3b" stroke-width="1.1"/></svg>
<i class="abs" style="left:1466.00px;top:853.60px;width:5.00px;height:0.90px;background:#666"></i>
<i class="abs" style="left:1476.00px;top:853.70px;width:77.50px;height:0.70px;background:#9a9a9a"></i>
<i class="abs" style="left:1514.40px;top:852.00px;width:0.70px;height:4.20px;background:#8a8a8a"></i>
<i class="abs" style="left:1507.20px;top:850.00px;width:3.20px;height:8.50px;background:#555;border-radius:0.6px"></i>
<svg class="abs" style="left:1557.50px;top:851.00px" width="6" height="6" viewBox="0 0 6 6"><path d="M3 0.3 V5.7 M0.3 3 H5.7" stroke="#555" stroke-width="0.9"/></svg>
<span class="t" style="left:1574.00px;top:849.00px;font-size:7.9px;letter-spacing:-0.099px;color:#444;">85%</span>
<i class="abs" style="left:0.00px;top:862.30px;width:1600.00px;height:37.70px;background:#cfe3f1"></i>
<svg class="abs" style="left:15.00px;top:872.00px" width="21" height="15" viewBox="0 0 21 15"><defs><linearGradient id="cl" x1="0" y1="0" x2="0" y2="1"><stop offset="0" stop-color="#d6e2fa"/><stop offset="1" stop-color="#aec4f2"/></linearGradient></defs><path d="M4.6 13.6 Q0.6 13.6 0.6 10.2 Q0.6 7.2 3.8 6.8 Q4.6 2.4 9.4 2.4 Q13.4 2.4 14.6 6 Q19.6 6 19.6 10 Q19.6 13.6 15.6 13.6 Z" fill="url(#cl)" stroke="#98b2ee" stroke-width="0.9"/></svg>
<i class="abs" style="left:24.30px;top:867.30px;width:12.40px;height:12.40px;background:#c42b1c;border-radius:50%"></i>
<span class="t" style="left:28.20px;top:868.00px;font-size:8.2px;letter-spacing:0.238px;color:#fff;">5</span>
<span class="t" style="left:40.00px;top:868.00px;font-size:10.2px;transform:scaleX(0.8549);transform-origin:0 50%;color:#1f1f1f;">40°F</span>
<span class="t" style="left:40.00px;top:881.00px;font-size:9.7px;letter-spacing:-0.109px;color:#5c5c5c;">Cloudy</span>
<i class="abs" style="left:565.50px;top:872.40px;width:8.70px;height:8.80px;background:linear-gradient(135deg,#5ccbfb,#1185e0);border-radius:1px"></i>
<i class="abs" style="left:575.00px;top:872.40px;width:8.70px;height:8.80px;background:linear-gradient(135deg,#5ccbfb,#1185e0);border-radius:1px"></i>
<i class="abs" style="left:565.50px;top:882.00px;width:8.70px;height:8.80px;background:linear-gradient(135deg,#5ccbfb,#1185e0);border-radius:1px"></i>
<i class="abs" style="left:575.00px;top:882.00px;width:8.70px;height:8.80px;background:linear-gradient(135deg,#5ccbfb,#1185e0);border-radius:1px"></i>
<i class="abs" style="left:595.00px;top:869.40px;width:170.00px;height:23.60px;background:#eef5fb;border-radius:12px;box-shadow:0 0 0 0.6px #d5e3ee"></i>
<svg class="abs" style="left:603.50px;top:874.50px" width="13" height="13" viewBox="0 0 13 13"><circle cx="5.4" cy="5.4" r="4.2" fill="none" stroke="#222" stroke-width="1.3"/><path d="M8.4 8.6 L11.8 12" stroke="#222" stroke-width="1.5" stroke-linecap="round"/></svg>
<span class="t" style="left:623.10px;top:875.00px;font-size:11.5px;transform:scaleX(0.8837);transform-origin:0 50%;color:#5a5a5a;">Search</span>
<svg class="abs" style="left:724.00px;top:871.50px" width="40" height="21" viewBox="0 0 40 21"><defs><clipPath id="pc"><path d="M0 0 H28 Q40 0 40 10.5 Q40 21 28 21 H0 Z"/></clipPath></defs><g clip-path="url(#pc)"><ellipse cx="22" cy="15" rx="19" ry="5.4" fill="#5b7fb8"/><ellipse cx="21" cy="16.4" rx="15" ry="3.6" fill="#7f9fd0"/><path d="M22 6 Q30 -2 40 4 V12 H24 Z" fill="#4f68b8"/><path d="M30 3 Q34 1 38 3 L36 5 Z" fill="#e8c070"/><path d="M9 8 Q8.6 3.6 12 3.4 Q15 3 16.4 5.6 Q22 4.6 26.6 7 Q30 9 29.6 14 Q26 16.6 20 15.4 Q14 16.6 10.4 13.6 Q8.6 11 9 8 Z" fill="#ece6f2"/><path d="M12 13.4 Q16 15.6 20 14.2 M22 9 Q24 12 22.6 14.6" fill="none" stroke="#c8bfd6" stroke-width="0.8"/><circle cx="11.6" cy="6.8" r="0.6" fill="#444"/><circle cx="9.6" cy="8.6" r="0.7" fill="#444"/></g></svg>
<i class="abs" style="left:781.50px;top:872.50px;width:12.50px;height:12.50px;background:linear-gradient(135deg,#f8f8f8,#bdbdbd);border-radius:1.5px"></i>
<i class="abs" style="left:775.50px;top:878.00px;width:12.50px;height:12.20px;background:#1b1b1b;border-radius:1.5px"></i>
<i class="abs" style="left:781.50px;top:878.00px;width:6.50px;height:7.00px;background:#9a9a9a"></i>
<svg class="abs" style="left:809.50px;top:872.50px" width="20" height="18" viewBox="0 0 20 18"><path d="M1 2 Q1 0.6 2.4 0.6 H7 L9.4 3 H18 Q19.4 3 19.4 4.4 V16 Q19.4 17.4 18 17.4 H2.4 Q1 17.4 1 16 Z" fill="#e8a520"/><path d="M1 5.4 H19.4 V16 Q19.4 17.4 18 17.4 H2.4 Q1 17.4 1 16 Z" fill="#fbc93d"/><path d="M4.4 17.4 V14 Q4.4 12.4 6 12.4 H14.4 Q16 12.4 16 14 V17.4 Z" fill="#1f7fd6"/></svg>
<svg class="abs" style="left:844.00px;top:872.50px" width="19" height="18" viewBox="0 0 19 18"><ellipse cx="9.5" cy="9" rx="9" ry="8.8" fill="#e8192c"/><ellipse cx="9.5" cy="9" rx="4.2" ry="6.6" fill="#cfe3f1"/></svg>
<svg class="abs" style="left:878.50px;top:872.50px" width="19" height="19" viewBox="0 0 19 19"><circle cx="9.5" cy="9.5" r="9.2" fill="#e33b2e"/><path d="M9.5 9.5 L1.6 5 A9.2 9.2 0 0 0 9.8 18.7 L13.6 11.6 Z" fill="#2da94f"/><path d="M9.5 9.5 L13.6 11.6 L9.8 18.7 A9.2 9.2 0 0 0 17.6 5 H9.5 Z" fill="#fbbc05"/><circle cx="9.5" cy="9.5" r="4.4" fill="#fff"/><circle cx="9.5" cy="9.5" r="3.4" fill="#4a8af4"/></svg>
<i class="abs" style="left:889.00px;top:868.00px;width:12.00px;height:12.00px;background:linear-gradient(#c8c8c8,#a8a8a8);border-radius:50%"></i>
<i class="abs" style="left:891.00px;top:873.40px;width:8.00px;height:1.20px;background:#e4e4e4"></i>
<svg class="abs" style="left:913.00px;top:871.50px" width="20" height="20" viewBox="0 0 20 20"><rect x="0.4" y="0.6" width="13.6" height="13.6" rx="1.4" fill="#f3f3f3"/><rect x="2.4" y="2.4" width="8.6" height="8.6" fill="#fff" stroke="#d8402a" stroke-width="1.4" stroke-dasharray="1.6 1.4"/><path d="M6 6 L16 16 M12.6 7.6 L9 18" stroke="#8a8a8a" stroke-width="1.3"/><circle cx="16.6" cy="9.6" r="1.7" fill="none" stroke="#2a8fe0" stroke-width="1.1"/><circle cx="9.6" cy="18" r="1.7" fill="none" stroke="#2a8fe0" stroke-width="1.1"/></svg>
<i class="abs" style="left:947.50px;top:871.50px;width:19.00px;height:19.00px;background:#0a0a0a;border-radius:50%"></i>
<span class="t" style="left:950.60px;top:874.00px;font-size:9.6px;transform:scaleX(1.1079);transform-origin:0 50%;font-weight:bold;color:#fff;">up</span>
<svg class="abs" style="left:984.00px;top:871.50px" width="15" height="20" viewBox="0 0 15 20"><rect x="0.6" y="1.6" width="13.6" height="16.4" rx="1" fill="#5cc6ea"/><rect x="0.6" y="16" width="13.6" height="2.6" fill="#b5651d"/><path d="M3 5.4 H12 M3 8 H12 M3 10.6 H12 M3 13.2 H12" stroke="#1f6f9a" stroke-width="1"/><path d="M3 0.4 V2.6 M6 0.4 V2.6 M9 0.4 V2.6 M12 0.4 V2.6" stroke="#1f5f80" stroke-width="1.1"/></svg>
<svg class="abs" style="left:1016.00px;top:872.50px" width="19" height="17.5" viewBox="0 0 19 17.5"><rect x="5" y="0" width="14" height="17.5" rx="1.4" fill="#21a366"/><rect x="12" y="0" width="7" height="8.7" fill="#33c481"/><rect x="5" y="8.7" width="7" height="8.8" fill="#107c41"/><rect x="12" y="8.7" width="7" height="8.8" fill="#185c37"/><rect x="0" y="3.6" width="10.6" height="10.6" rx="1.2" fill="#107c41"/><text x="5.3" y="12" font-size="8.4" font-weight="bold" fill="#fff" text-anchor="middle" font-family="Liberation Sans,sans-serif">x</text></svg>
<i class="abs" style="left:816.50px;top:894.00px;width:5.00px;height:2.00px;background:#8e8e8e;border-radius:1px"></i>
<i class="abs" style="left:851.00px;top:894.00px;width:5.00px;height:2.00px;background:#8e8e8e;border-radius:1px"></i>
<i class="abs" style="left:885.50px;top:894.00px;width:5.00px;height:2.00px;background:#8e8e8e;border-radius:1px"></i>
<i class="abs" style="left:954.20px;top:894.00px;width:5.00px;height:2.00px;background:#8e8e8e;border-radius:1px"></i>
<i class="abs" style="left:988.50px;top:894.00px;width:5.00px;height:2.00px;background:#8e8e8e;border-radius:1px"></i>
<i class="abs" style="left:1023.00px;top:894.00px;width:5.00px;height:2.00px;background:#8e8e8e;border-radius:1px"></i>
<svg class="abs" style="left:1474.00px;top:878.00px" width="10" height="6" viewBox="0 0 10 6"><path d="M0.8 5.2 L5 1 L9.2 5.2" fill="none" stroke="#222" stroke-width="1.3" stroke-linecap="round" stroke-linejoin="round"/></svg>
<svg class="abs" style="left:1497.00px;top:874.50px" width="14" height="13" viewBox="0 0 14 13"><rect x="0.6" y="1.6" width="8.6" height="8" rx="0.8" fill="none" stroke="#333" stroke-width="1"/><path d="M2.6 12 H9 M5 9.6 V12" stroke="#333" stroke-width="1"/><rect x="9.6" y="0.6" width="2.8" height="4" rx="0.8" fill="#cfe3f1" stroke="#333" stroke-width="0.9"/><path d="M11 4.6 V12 H8" fill="none" stroke="#333" stroke-width="0.9"/></svg>
<svg class="abs" style="left:1516.00px;top:874.50px" width="14" height="12" viewBox="0 0 14 12"><path d="M0.8 4.2 H3 L6 1.4 V10.6 L3 7.8 H0.8 Z" fill="none" stroke="#333" stroke-width="1" stroke-linejoin="round"/><path d="M7.8 4 Q9 6 7.8 8 M9.6 2.6 Q11.6 6 9.6 9.4 M11.4 1.2 Q14.2 6 11.4 10.8" fill="none" stroke="#333" stroke-width="0.9" stroke-linecap="round"/></svg>
<span class="t" style="left:1551.50px;top:868.00px;font-size:9.5px;transform:scaleX(0.9325);transform-origin:0 50%;color:#1f1f1f;">1:53 PM</span>
<span class="t" style="left:1542.00px;top:880.00px;font-size:9.5px;letter-spacing:0.026px;color:#1f1f1f;">2/27/2025</span>
</body></html>
